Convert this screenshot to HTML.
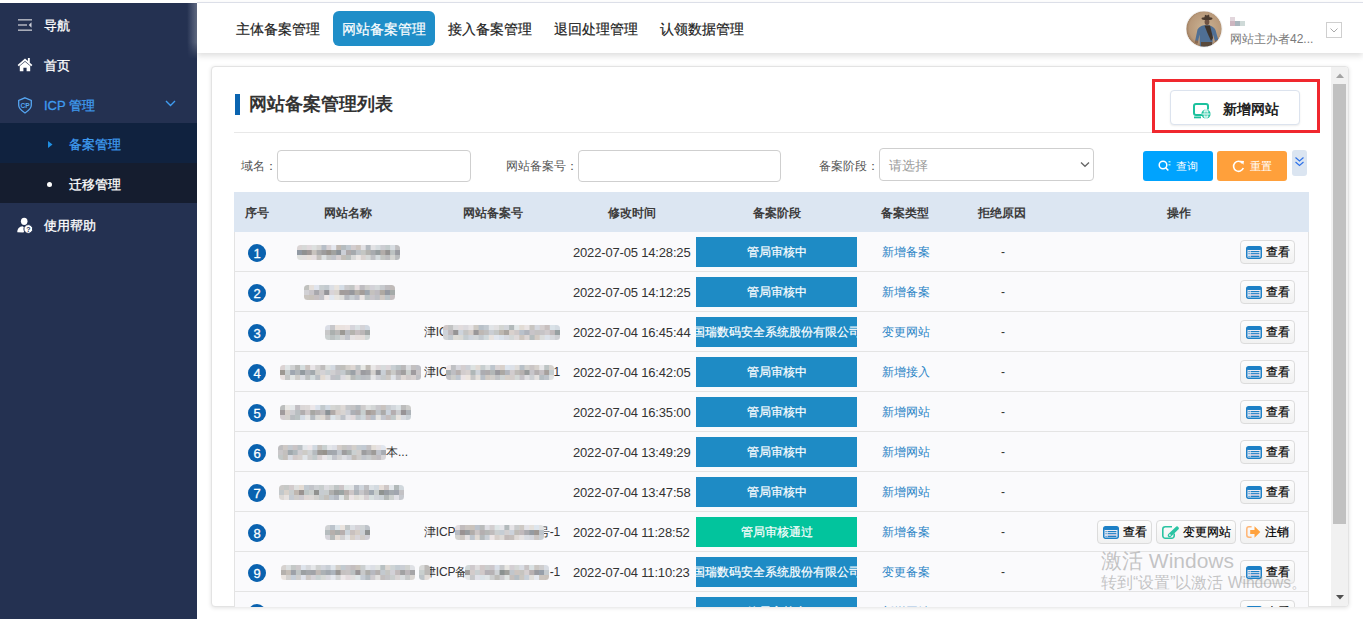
<!DOCTYPE html>
<html><head><meta charset="utf-8">
<style>
*{box-sizing:border-box;margin:0;padding:0}
html,body{width:1363px;height:619px;overflow:hidden;background:#fff;font-family:"Liberation Sans",sans-serif;color:#333}
.abs{position:absolute}
#side{position:absolute;left:0;top:3px;width:197px;height:616px;background:#243151}
.mi{position:absolute;left:0;width:197px;height:40px;color:#fff;font-size:13px;line-height:40px}
.mi .t{position:absolute;left:44px;top:2px;-webkit-text-stroke:0.3px currentColor}
.mi svg{position:absolute}
#topbar{position:absolute;left:197px;top:2px;width:1166px;height:51px;background:#fff;border-top:1px solid #dcdfe8;box-shadow:0 3px 6px rgba(0,0,0,.13)}
.nav{position:absolute;top:8px;height:35px;line-height:36px;-webkit-text-stroke:0.2px currentColor;font-size:14px;color:#222;padding:0 9px;border-radius:6px}
.nav.on{background:#1f8ec8;color:#fff}
#panel{position:absolute;left:211px;top:66px;width:1138px;height:541px;background:#fff;border:1px solid #e3e3e3;border-radius:4px;box-shadow:0 1px 4px rgba(0,0,0,.12);overflow:hidden}
.lbl{position:absolute;font-size:12px;color:#555;line-height:16px}
.inp{position:absolute;height:32px;border:1px solid #cfcfcf;border-radius:4px;background:#fff}
#thead{position:absolute;left:234px;top:192px;width:1075px;height:40px;background:#dce6f2}
.th{position:absolute;top:1px;line-height:40px;font-size:12px;font-weight:bold;color:#3c3c3c;transform:translateX(-50%);white-space:nowrap}
.row{position:absolute;left:234px;width:1075px;height:40px;background:#fafafc;border-left:1px solid #e3e3e3;border-right:1px solid #e3e3e3;border-bottom:1px solid #e4e4e4}
.badge{position:absolute;left:13px;top:12px;width:18px;height:18px;border-radius:50%;background:#0a62af;color:#fff;font-size:13px;-webkit-text-stroke:0.3px #fff;text-align:center;line-height:19px}
.blob{position:absolute}
.txt{position:absolute;top:0;line-height:40px;font-size:13px;color:#333;white-space:nowrap}
.icpt{font-size:12px;letter-spacing:-0.2px}
.date{position:absolute;left:338px;top:1px;line-height:40px;font-size:13px;color:#333;letter-spacing:-0.17px;white-space:nowrap}
.st{position:absolute;left:461px;top:5px;width:161px;height:30px;overflow:hidden;color:#fff;font-size:12px;-webkit-text-stroke:0.2px #fff;line-height:30px;text-align:center;white-space:nowrap}
.st span{position:absolute;left:50%;top:0;transform:translateX(-50%)}
.stb{background:#1e8bc5}
.stg{background:#02c49d}
.tp{position:absolute;left:647px;top:0;line-height:40px;font-size:12px;color:#2a84c6}
.dash{position:absolute;left:766px;top:0;line-height:40px;font-size:12px;color:#333}
.ops{position:absolute;right:13px;top:8px;height:24px;display:flex;gap:4px}
.ob{height:24px;border:1px solid #dcdcdc;border-radius:4px;background:linear-gradient(#fdfdfd,#f1f1f1);display:flex;align-items:center;padding-left:4.5px;font-size:12px;color:#000;-webkit-text-stroke:0.2px #000}
.ob b{font-weight:normal;margin-left:4.5px}
.ob55{width:55px}.ob80{width:80px}
#wm1{position:absolute;left:1101px;top:548px;font-size:21px;color:rgba(140,140,140,.5);white-space:nowrap;line-height:26px}
#wm2{position:absolute;left:1101px;top:574px;font-size:15.6px;color:rgba(140,140,140,.5);white-space:nowrap;line-height:18px}
</style></head><body>
<svg width="0" height="0" style="position:absolute"><defs><filter id="bl" x="-5%" y="-20%" width="110%" height="140%"><feGaussianBlur stdDeviation="0.3"/></filter></defs></svg>

<!-- sidebar -->
<div id="side">
  <div class="mi" style="top:1px">
    <svg style="left:18px;top:15px" width="14" height="12" viewBox="0 0 14 12"><rect x="0" y="0" width="14" height="1.6" fill="#a8acb8"/><rect x="0" y="5.2" width="9" height="1.6" fill="#a8acb8"/><rect x="0" y="10.4" width="14" height="1.6" fill="#a8acb8"/><path d="M13.5 3.2v5.6L10.8 6z" fill="#d0d3dc"/></svg>
    <span class="t">导航</span>
  </div>
  <div class="mi" style="top:41px">
    <svg style="left:17px;top:13px" width="16" height="15" viewBox="0 0 16 15"><path d="M8 1.6L0.6 8l1.2 1.2L8 3.9l6.2 5.3 1.2-1.2L12.8 5.7V0.9h-1.9v3.2z" fill="#fff"/><path d="M2.8 9L8 4.7l5.2 4.3v5.2H9.6v-3.4H6.4v3.4H2.8z" fill="#fff"/></svg>
    <span class="t">首页</span>
  </div>
  <div class="mi" style="top:81px;color:#3f9cf0">
    <svg style="left:18px;top:13px" width="15" height="17" viewBox="0 0 15 17"><path d="M7 0.8L13.3 3.5V8.3C13.3 11 10.5 13.8 7 16C3.5 13.8 0.7 11 0.7 8.3V3.5Z" fill="none" stroke="#55a6f2" stroke-width="1.3"/><text x="7.2" y="11.2" font-size="6.6" font-family="Liberation Sans" font-weight="bold" fill="#55a6f2" text-anchor="middle">CP</text></svg>
    <span class="t">ICP 管理</span>
    <svg style="left:165px;top:16px" width="11" height="7" viewBox="0 0 11 7"><path d="M1 1l4.5 4.5L10 1" fill="none" stroke="#3f9cf0" stroke-width="1.4"/></svg>
  </div>
  <div class="mi" style="top:120px;background:#10223f;color:#3f9cf0">
    <svg style="left:48px;top:18px" width="5" height="7" viewBox="0 0 5 7"><path d="M0 0l4.5 3.5L0 7z" fill="#1f8ee0"/></svg>
    <span class="t" style="left:69px">备案管理</span>
  </div>
  <div class="mi" style="top:160px;background:#151d2f">
    <div class="abs" style="left:47px;top:19px;width:5px;height:5px;border-radius:50%;background:#fff"></div>
    <span class="t" style="left:69px">迁移管理</span>
  </div>
  <div class="mi" style="top:201px">
    <svg style="left:17px;top:13px" width="16" height="17" viewBox="0 0 16 17"><ellipse cx="7.2" cy="4.3" rx="3.3" ry="3.6" fill="#fff"/><path d="M0.3 15.2C0.3 12 2.2 9.6 5.5 9.3L7 10.2 9.2 9.5L6.5 15.5z" fill="#fff"/><circle cx="11.3" cy="12" r="4.4" fill="#fff" stroke="#243151" stroke-width="1"/><text x="11.3" y="14.6" font-size="7" font-weight="bold" font-family="Liberation Sans" fill="#243151" text-anchor="middle">?</text></svg>
    <span class="t">使用帮助</span>
  </div>
</div>

<div class="abs" style="left:187px;top:3px;width:10px;height:56px;background:linear-gradient(90deg,rgba(255,255,255,0),rgba(220,225,235,.35));-webkit-mask-image:linear-gradient(#000 0,#000 70%,transparent 100%)"></div>
<!-- top bar -->
<div id="topbar">
  <div class="nav" style="left:30px">主体备案管理</div>
  <div class="nav on" style="left:136px">网站备案管理</div>
  <div class="nav" style="left:242px">接入备案管理</div>
  <div class="nav" style="left:348px">退回处理管理</div>
  <div class="nav" style="left:454px">认领数据管理</div>
  <svg class="abs" style="left:989px;top:8px" width="38" height="38" viewBox="0 0 38 38"><defs><clipPath id="av"><circle cx="18" cy="18" r="17.8"/></clipPath><radialGradient id="avg" cx="50%" cy="45%" r="55%"><stop offset="0" stop-color="#cbb394"/><stop offset=".75" stop-color="#b8997a"/><stop offset="1" stop-color="#8e6c4f"/></radialGradient></defs><g clip-path="url(#av)"><rect width="38" height="38" fill="url(#avg)"/><path d="M9 30.5L11.5 18.5Q13.5 15 18 14.3L23 14.3Q27.5 15.2 29.5 19L32.5 29.5 29 30.5 27 23.5 26 38H14L13.5 23.5 12 31z" fill="#4f6f94"/><path d="M18.5 14.5L24 14.5 27 27 25 30 21 21z" fill="#3e342c"/><rect x="15" y="31" width="11" height="7" fill="#5a4a3c"/><circle cx="10.5" cy="31" r="1.8" fill="#8a6a52"/><circle cx="31" cy="30.5" r="1.8" fill="#8a6a52"/><ellipse cx="21" cy="11" rx="2.4" ry="3" fill="#6e5242"/><ellipse cx="21" cy="7.5" rx="5.5" ry="1.5" fill="#4b3b2f"/><path d="M18.3 7.6L19 3.8 21 4.5 23 3.6 23.8 7.6z" fill="#4b3b2f"/></g><circle cx="18" cy="18" r="18.2" fill="none" stroke="#efefef" stroke-width=".8"/></svg>
  <div class="abs" style="left:1033px;top:14px;width:5px;height:9px;background:linear-gradient(#e2d6dc 0,#e2d6dc 45%,#cdb6c0 45%)"></div><div class="abs" style="left:1038px;top:18px;width:5px;height:5px;background:#a9b6bd"></div><div class="abs" style="left:1043px;top:18px;width:5px;height:5px;background:#cfdad8"></div>
  <div class="abs" style="left:1033px;top:27px;font-size:12px;color:#7a7a7a;line-height:18px;white-space:nowrap">网站主办者42...</div>
  <div class="abs" style="left:1129px;top:19px;width:16px;height:16px;border:1px solid #cfcfcf">
    <svg style="position:absolute;left:3px;top:5px" width="8" height="5" viewBox="0 0 8 5"><path d="M0.5 0.5L4 4l3.5-3.5" fill="none" stroke="#aaa" stroke-width="1"/></svg>
  </div>
</div>

<!-- panel -->
<div id="panel">
  <!-- scrollbar -->
  <div class="abs" style="left:1119px;top:0;width:17px;height:539px;background:#f1f1f1"></div>
  <svg class="abs" style="left:1124px;top:6px" width="8" height="5" viewBox="0 0 8 5"><path d="M0 5L4 0.5 8 5z" fill="#a3a3a3"/></svg>
  <div class="abs" style="left:1121px;top:17px;width:13px;height:440px;background:#c1c1c1"></div>
  <svg class="abs" style="left:1124px;top:528px" width="8" height="5" viewBox="0 0 8 5"><path d="M0 0L4 4.5 8 0z" fill="#505050"/></svg>
</div>

<div class="abs" style="left:235px;top:94px;width:5px;height:21px;background:#0a64b0"></div>
<div class="abs" style="left:249px;top:92px;font-size:18px;font-weight:bold;color:#333;line-height:24px">网站备案管理列表</div>
<div class="abs" style="left:234px;top:132px;width:918px;height:1px;background:#e8e8e8"></div>

<!-- new site button + red box -->
<div class="abs" style="left:1170px;top:90px;width:130px;height:35px;border:1px solid #dce3ee;border-radius:4px;background:#fff;box-shadow:0 1px 2px rgba(0,0,0,.08)">
  <svg style="position:absolute;left:22px;top:12px" width="18" height="16" viewBox="0 0 18 16"><path d="M3 1h10a2 2 0 0 1 2 2v3.5M9 12H3a2 2 0 0 1-2-2V3a2 2 0 0 1 2-2" fill="none" stroke="#1cc19d" stroke-width="2"/><rect x="1" y="13.5" width="7" height="1.8" fill="#1cc19d"/><circle cx="13" cy="11" r="4.6" fill="#1cc19d"/><path d="M8.6 11h8.8M13 6.5v9M10.6 8.2h4.8M10.6 13.8h4.8" stroke="#fff" stroke-width="0.8"/><ellipse cx="13" cy="11" rx="2" ry="4.4" fill="none" stroke="#fff" stroke-width="0.8"/></svg>
  <div class="abs" style="left:52px;top:1px;line-height:34px;font-size:14px;font-weight:bold;color:#222">新增网站</div>
</div>
<div class="abs" style="left:1152px;top:79px;width:168px;height:54px;border:3px solid #f0282e"></div>

<!-- filter -->
<div class="lbl" style="left:241px;top:158px">域名：</div>
<div class="inp" style="left:277px;top:150px;width:194px"></div>
<div class="lbl" style="left:506px;top:158px">网站备案号：</div>
<div class="inp" style="left:578px;top:150px;width:203px"></div>
<div class="lbl" style="left:819px;top:158px">备案阶段：</div>
<div class="inp" style="left:879px;top:148px;width:215px;height:33px">
  <div class="abs" style="left:9px;top:1px;line-height:32px;font-size:12.5px;color:#9a9a9a">请选择</div>
  <svg style="position:absolute;left:200px;top:12px" width="10" height="7" viewBox="0 0 10 7"><path d="M1 1.5l4 3.8 4-3.8" fill="none" stroke="#666" stroke-width="1.3"/></svg>
</div>
<div class="abs" style="left:1143px;top:151px;width:70px;height:30px;border-radius:3px;background:#00a3fe;color:#fff;font-size:12px;line-height:30px">
  <svg style="position:absolute;left:15px;top:9px" width="13" height="12" viewBox="0 0 13 12"><circle cx="5" cy="5" r="3.8" fill="none" stroke="#fff" stroke-width="1.5"/><path d="M7.8 7.8l2.5 2.8" stroke="#fff" stroke-width="1.5"/><rect x="10.5" y="1.2" width="2" height="1.2" fill="#cfe"/><rect x="10.5" y="4.2" width="2" height="1.2" fill="#cfe"/></svg>
  <span class="abs" style="left:33px;top:0;font-size:11px">查询</span>
</div>
<div class="abs" style="left:1217px;top:151px;width:70px;height:30px;border-radius:3px;background:#ffa03b;color:#fff;font-size:12px;line-height:30px">
  <svg style="position:absolute;left:15px;top:8px" width="13" height="14" viewBox="0 0 13 14"><path d="M10.5 4.2A5 5 0 1 0 11.3 9" fill="none" stroke="#fff" stroke-width="1.6"/><path d="M8.2 1.8l3.8 0.2-0.6 3.7z" fill="#fff"/></svg>
  <span class="abs" style="left:33px;top:0;font-size:11px">重置</span>
</div>
<div class="abs" style="left:1292px;top:150px;width:15px;height:26px;border-radius:3px;background:#dbe5f1">
  <svg style="position:absolute;left:2px;top:6px" width="11" height="12" viewBox="0 0 11 12"><path d="M1.5 1.5l4 3.5 4-3.5M1.5 6l4 3.5 4-3.5" fill="none" stroke="#2f72e8" stroke-width="1.2"/></svg>
</div>

<!-- table header -->
<div id="thead">
  <div class="th" style="left:23px">序号</div>
  <div class="th" style="left:114px">网站名称</div>
  <div class="th" style="left:259px">网站备案号</div>
  <div class="th" style="left:398px">修改时间</div>
  <div class="th" style="left:543px">备案阶段</div>
  <div class="th" style="left:671px">备案类型</div>
  <div class="th" style="left:768px">拒绝原因</div>
  <div class="th" style="left:945px">操作</div>
</div>

<div class="abs" style="left:0;top:0;width:1363px;height:607px;overflow:hidden;pointer-events:none">
<div class="row" style="top:232px"><div class="badge">1</div><svg class="blob" style="left:62px;top:13px" width="103" height="15" viewBox="0 0 103 15"><clipPath id="c11"><rect width="103" height="15" rx="3.5"/></clipPath><g clip-path="url(#c11)"><g filter="url(#bl)"><rect x="0.0" y="0.0" width="5.5" height="5.6" fill="rgb(219,213,213)"/><rect x="4.9" y="0.0" width="5.5" height="5.6" fill="rgb(215,217,216)"/><rect x="9.8" y="0.0" width="5.5" height="5.6" fill="rgb(224,217,220)"/><rect x="14.7" y="0.0" width="5.5" height="5.6" fill="rgb(221,224,223)"/><rect x="19.6" y="0.0" width="5.5" height="5.6" fill="rgb(214,213,211)"/><rect x="24.5" y="0.0" width="5.5" height="5.6" fill="rgb(183,190,199)"/><rect x="29.4" y="0.0" width="5.5" height="5.6" fill="rgb(216,210,213)"/><rect x="34.3" y="0.0" width="5.5" height="5.6" fill="rgb(229,232,239)"/><rect x="39.2" y="0.0" width="5.5" height="5.6" fill="rgb(193,185,178)"/><rect x="44.1" y="0.0" width="5.5" height="5.6" fill="rgb(181,188,191)"/><rect x="49.0" y="0.0" width="5.5" height="5.6" fill="rgb(192,200,207)"/><rect x="54.0" y="0.0" width="5.5" height="5.6" fill="rgb(211,205,207)"/><rect x="58.9" y="0.0" width="5.5" height="5.6" fill="rgb(205,197,192)"/><rect x="63.8" y="0.0" width="5.5" height="5.6" fill="rgb(226,225,228)"/><rect x="68.7" y="0.0" width="5.5" height="5.6" fill="rgb(179,185,191)"/><rect x="73.6" y="0.0" width="5.5" height="5.6" fill="rgb(226,226,228)"/><rect x="78.5" y="0.0" width="5.5" height="5.6" fill="rgb(214,220,223)"/><rect x="83.4" y="0.0" width="5.5" height="5.6" fill="rgb(204,205,210)"/><rect x="88.3" y="0.0" width="5.5" height="5.6" fill="rgb(195,203,204)"/><rect x="93.2" y="0.0" width="5.5" height="5.6" fill="rgb(216,221,226)"/><rect x="98.1" y="0.0" width="5.5" height="5.6" fill="rgb(192,191,193)"/><rect x="0.0" y="5.0" width="5.5" height="5.6" fill="rgb(145,153,163)"/><rect x="4.9" y="5.0" width="5.5" height="5.6" fill="rgb(143,145,145)"/><rect x="9.8" y="5.0" width="5.5" height="5.6" fill="rgb(158,151,150)"/><rect x="14.7" y="5.0" width="5.5" height="5.6" fill="rgb(200,195,190)"/><rect x="19.6" y="5.0" width="5.5" height="5.6" fill="rgb(170,170,171)"/><rect x="24.5" y="5.0" width="5.5" height="5.6" fill="rgb(157,156,157)"/><rect x="29.4" y="5.0" width="5.5" height="5.6" fill="rgb(151,146,141)"/><rect x="34.3" y="5.0" width="5.5" height="5.6" fill="rgb(161,162,160)"/><rect x="39.2" y="5.0" width="5.5" height="5.6" fill="rgb(139,146,153)"/><rect x="44.1" y="5.0" width="5.5" height="5.6" fill="rgb(204,207,215)"/><rect x="49.0" y="5.0" width="5.5" height="5.6" fill="rgb(175,169,170)"/><rect x="54.0" y="5.0" width="5.5" height="5.6" fill="rgb(165,169,173)"/><rect x="58.9" y="5.0" width="5.5" height="5.6" fill="rgb(189,194,199)"/><rect x="63.8" y="5.0" width="5.5" height="5.6" fill="rgb(196,198,195)"/><rect x="68.7" y="5.0" width="5.5" height="5.6" fill="rgb(180,179,175)"/><rect x="73.6" y="5.0" width="5.5" height="5.6" fill="rgb(168,171,175)"/><rect x="78.5" y="5.0" width="5.5" height="5.6" fill="rgb(150,157,159)"/><rect x="83.4" y="5.0" width="5.5" height="5.6" fill="rgb(178,172,169)"/><rect x="88.3" y="5.0" width="5.5" height="5.6" fill="rgb(148,146,145)"/><rect x="93.2" y="5.0" width="5.5" height="5.6" fill="rgb(188,194,194)"/><rect x="98.1" y="5.0" width="5.5" height="5.6" fill="rgb(154,156,162)"/><rect x="0.0" y="10.0" width="5.5" height="5.6" fill="rgb(224,225,222)"/><rect x="4.9" y="10.0" width="5.5" height="5.6" fill="rgb(226,223,223)"/><rect x="9.8" y="10.0" width="5.5" height="5.6" fill="rgb(230,224,219)"/><rect x="14.7" y="10.0" width="5.5" height="5.6" fill="rgb(229,222,224)"/><rect x="19.6" y="10.0" width="5.5" height="5.6" fill="rgb(197,193,189)"/><rect x="24.5" y="10.0" width="5.5" height="5.6" fill="rgb(221,225,227)"/><rect x="29.4" y="10.0" width="5.5" height="5.6" fill="rgb(198,199,199)"/><rect x="34.3" y="10.0" width="5.5" height="5.6" fill="rgb(193,195,202)"/><rect x="39.2" y="10.0" width="5.5" height="5.6" fill="rgb(216,209,211)"/><rect x="44.1" y="10.0" width="5.5" height="5.6" fill="rgb(195,190,184)"/><rect x="49.0" y="10.0" width="5.5" height="5.6" fill="rgb(186,191,190)"/><rect x="54.0" y="10.0" width="5.5" height="5.6" fill="rgb(217,217,216)"/><rect x="58.9" y="10.0" width="5.5" height="5.6" fill="rgb(236,232,230)"/><rect x="63.8" y="10.0" width="5.5" height="5.6" fill="rgb(218,211,208)"/><rect x="68.7" y="10.0" width="5.5" height="5.6" fill="rgb(215,218,217)"/><rect x="73.6" y="10.0" width="5.5" height="5.6" fill="rgb(192,193,197)"/><rect x="78.5" y="10.0" width="5.5" height="5.6" fill="rgb(214,220,223)"/><rect x="83.4" y="10.0" width="5.5" height="5.6" fill="rgb(196,198,195)"/><rect x="88.3" y="10.0" width="5.5" height="5.6" fill="rgb(189,189,191)"/><rect x="93.2" y="10.0" width="5.5" height="5.6" fill="rgb(212,213,210)"/><rect x="98.1" y="10.0" width="5.5" height="5.6" fill="rgb(184,187,189)"/></g></g></svg><div class="date">2022-07-05 14:28:25</div><div class="st stb"><span>管局审核中</span></div><div class="tp">新增备案</div><div class="dash">-</div><div class="ops"><span class="ob ob55"><svg width="16" height="13" viewBox="0 0 16 13"><path d="M0.75 2.5A1.75 1.75 0 0 1 2.5 0.75h11A1.75 1.75 0 0 1 15.25 2.5v8A1.75 1.75 0 0 1 13.5 12.25h-11A1.75 1.75 0 0 1 0.75 10.5z" fill="#eeedf5" stroke="#1d80c6" stroke-width="1.5"/><rect x="0.75" y="0.75" width="14.5" height="3.2" rx="1.5" fill="#1d80c6"/><rect x="4.6" y="5" width="8.8" height="1.2" fill="#1d80c6"/><rect x="4.6" y="7.1" width="8.8" height="1.2" fill="#1d80c6"/><rect x="4.6" y="8.3" width="8.8" height="1.5" fill="#c9c6de"/><rect x="4.6" y="9.8" width="8.8" height="1.2" fill="#1d80c6"/><rect x="2.5" y="5" width="1.1" height="1.2" fill="#1d80c6"/><rect x="2.5" y="7.1" width="1.1" height="1.2" fill="#1d80c6"/><rect x="2.5" y="9.8" width="1.1" height="1.2" fill="#1d80c6"/></svg><b>查看</b></span></div></div>
<div class="row" style="top:272px"><div class="badge">2</div><svg class="blob" style="left:69px;top:13px" width="91" height="15" viewBox="0 0 91 15"><clipPath id="c22"><rect width="91" height="15" rx="3.5"/></clipPath><g clip-path="url(#c22)"><g filter="url(#bl)"><rect x="0.0" y="0.0" width="5.7" height="5.6" fill="rgb(192,193,190)"/><rect x="5.1" y="0.0" width="5.7" height="5.6" fill="rgb(230,224,219)"/><rect x="10.1" y="0.0" width="5.7" height="5.6" fill="rgb(224,229,238)"/><rect x="15.2" y="0.0" width="5.7" height="5.6" fill="rgb(201,207,209)"/><rect x="20.2" y="0.0" width="5.7" height="5.6" fill="rgb(195,202,207)"/><rect x="25.3" y="0.0" width="5.7" height="5.6" fill="rgb(220,223,229)"/><rect x="30.3" y="0.0" width="5.7" height="5.6" fill="rgb(233,228,222)"/><rect x="35.4" y="0.0" width="5.7" height="5.6" fill="rgb(213,221,230)"/><rect x="40.4" y="0.0" width="5.7" height="5.6" fill="rgb(202,201,203)"/><rect x="45.5" y="0.0" width="5.7" height="5.6" fill="rgb(194,197,196)"/><rect x="50.6" y="0.0" width="5.7" height="5.6" fill="rgb(230,222,223)"/><rect x="55.6" y="0.0" width="5.7" height="5.6" fill="rgb(190,188,192)"/><rect x="60.7" y="0.0" width="5.7" height="5.6" fill="rgb(206,206,204)"/><rect x="65.7" y="0.0" width="5.7" height="5.6" fill="rgb(211,210,216)"/><rect x="70.8" y="0.0" width="5.7" height="5.6" fill="rgb(213,217,219)"/><rect x="75.8" y="0.0" width="5.7" height="5.6" fill="rgb(199,202,206)"/><rect x="80.9" y="0.0" width="5.7" height="5.6" fill="rgb(190,188,191)"/><rect x="85.9" y="0.0" width="5.7" height="5.6" fill="rgb(192,187,185)"/><rect x="0.0" y="5.0" width="5.7" height="5.6" fill="rgb(210,209,213)"/><rect x="5.1" y="5.0" width="5.7" height="5.6" fill="rgb(201,197,201)"/><rect x="10.1" y="5.0" width="5.7" height="5.6" fill="rgb(169,168,173)"/><rect x="15.2" y="5.0" width="5.7" height="5.6" fill="rgb(196,192,195)"/><rect x="20.2" y="5.0" width="5.7" height="5.6" fill="rgb(149,148,153)"/><rect x="25.3" y="5.0" width="5.7" height="5.6" fill="rgb(217,212,216)"/><rect x="30.3" y="5.0" width="5.7" height="5.6" fill="rgb(217,212,207)"/><rect x="35.4" y="5.0" width="5.7" height="5.6" fill="rgb(162,156,154)"/><rect x="40.4" y="5.0" width="5.7" height="5.6" fill="rgb(162,157,157)"/><rect x="45.5" y="5.0" width="5.7" height="5.6" fill="rgb(150,152,157)"/><rect x="50.6" y="5.0" width="5.7" height="5.6" fill="rgb(179,175,169)"/><rect x="55.6" y="5.0" width="5.7" height="5.6" fill="rgb(163,157,153)"/><rect x="60.7" y="5.0" width="5.7" height="5.6" fill="rgb(158,166,174)"/><rect x="65.7" y="5.0" width="5.7" height="5.6" fill="rgb(196,193,190)"/><rect x="70.8" y="5.0" width="5.7" height="5.6" fill="rgb(190,187,192)"/><rect x="75.8" y="5.0" width="5.7" height="5.6" fill="rgb(175,169,162)"/><rect x="80.9" y="5.0" width="5.7" height="5.6" fill="rgb(149,153,161)"/><rect x="85.9" y="5.0" width="5.7" height="5.6" fill="rgb(165,170,169)"/><rect x="0.0" y="10.0" width="5.7" height="5.6" fill="rgb(202,197,192)"/><rect x="5.1" y="10.0" width="5.7" height="5.6" fill="rgb(200,194,187)"/><rect x="10.1" y="10.0" width="5.7" height="5.6" fill="rgb(199,192,193)"/><rect x="15.2" y="10.0" width="5.7" height="5.6" fill="rgb(194,193,199)"/><rect x="20.2" y="10.0" width="5.7" height="5.6" fill="rgb(239,232,232)"/><rect x="25.3" y="10.0" width="5.7" height="5.6" fill="rgb(225,231,240)"/><rect x="30.3" y="10.0" width="5.7" height="5.6" fill="rgb(233,230,226)"/><rect x="35.4" y="10.0" width="5.7" height="5.6" fill="rgb(223,223,220)"/><rect x="40.4" y="10.0" width="5.7" height="5.6" fill="rgb(183,186,192)"/><rect x="45.5" y="10.0" width="5.7" height="5.6" fill="rgb(201,207,211)"/><rect x="50.6" y="10.0" width="5.7" height="5.6" fill="rgb(188,191,199)"/><rect x="55.6" y="10.0" width="5.7" height="5.6" fill="rgb(234,229,227)"/><rect x="60.7" y="10.0" width="5.7" height="5.6" fill="rgb(189,196,197)"/><rect x="65.7" y="10.0" width="5.7" height="5.6" fill="rgb(200,197,202)"/><rect x="70.8" y="10.0" width="5.7" height="5.6" fill="rgb(190,192,197)"/><rect x="75.8" y="10.0" width="5.7" height="5.6" fill="rgb(208,201,195)"/><rect x="80.9" y="10.0" width="5.7" height="5.6" fill="rgb(188,196,200)"/><rect x="85.9" y="10.0" width="5.7" height="5.6" fill="rgb(198,191,193)"/></g></g></svg><div class="date">2022-07-05 14:12:25</div><div class="st stb"><span>管局审核中</span></div><div class="tp">新增备案</div><div class="dash">-</div><div class="ops"><span class="ob ob55"><svg width="16" height="13" viewBox="0 0 16 13"><path d="M0.75 2.5A1.75 1.75 0 0 1 2.5 0.75h11A1.75 1.75 0 0 1 15.25 2.5v8A1.75 1.75 0 0 1 13.5 12.25h-11A1.75 1.75 0 0 1 0.75 10.5z" fill="#eeedf5" stroke="#1d80c6" stroke-width="1.5"/><rect x="0.75" y="0.75" width="14.5" height="3.2" rx="1.5" fill="#1d80c6"/><rect x="4.6" y="5" width="8.8" height="1.2" fill="#1d80c6"/><rect x="4.6" y="7.1" width="8.8" height="1.2" fill="#1d80c6"/><rect x="4.6" y="8.3" width="8.8" height="1.5" fill="#c9c6de"/><rect x="4.6" y="9.8" width="8.8" height="1.2" fill="#1d80c6"/><rect x="2.5" y="5" width="1.1" height="1.2" fill="#1d80c6"/><rect x="2.5" y="7.1" width="1.1" height="1.2" fill="#1d80c6"/><rect x="2.5" y="9.8" width="1.1" height="1.2" fill="#1d80c6"/></svg><b>查看</b></span></div></div>
<div class="row" style="top:312px"><div class="badge">3</div><svg class="blob" style="left:90px;top:13px" width="45" height="15" viewBox="0 0 45 15"><clipPath id="c33"><rect width="45" height="15" rx="3.5"/></clipPath><g clip-path="url(#c33)"><g filter="url(#bl)"><rect x="0.0" y="0.0" width="5.6" height="5.6" fill="rgb(218,221,229)"/><rect x="5.0" y="0.0" width="5.6" height="5.6" fill="rgb(199,199,202)"/><rect x="10.0" y="0.0" width="5.6" height="5.6" fill="rgb(234,226,220)"/><rect x="15.0" y="0.0" width="5.6" height="5.6" fill="rgb(234,226,223)"/><rect x="20.0" y="0.0" width="5.6" height="5.6" fill="rgb(236,228,227)"/><rect x="25.0" y="0.0" width="5.6" height="5.6" fill="rgb(214,213,219)"/><rect x="30.0" y="0.0" width="5.6" height="5.6" fill="rgb(219,225,228)"/><rect x="35.0" y="0.0" width="5.6" height="5.6" fill="rgb(212,211,215)"/><rect x="40.0" y="0.0" width="5.6" height="5.6" fill="rgb(209,216,225)"/><rect x="0.0" y="5.0" width="5.6" height="5.6" fill="rgb(199,199,200)"/><rect x="5.0" y="5.0" width="5.6" height="5.6" fill="rgb(171,176,175)"/><rect x="10.0" y="5.0" width="5.6" height="5.6" fill="rgb(186,185,184)"/><rect x="15.0" y="5.0" width="5.6" height="5.6" fill="rgb(156,153,149)"/><rect x="20.0" y="5.0" width="5.6" height="5.6" fill="rgb(185,186,191)"/><rect x="25.0" y="5.0" width="5.6" height="5.6" fill="rgb(181,179,174)"/><rect x="30.0" y="5.0" width="5.6" height="5.6" fill="rgb(198,190,192)"/><rect x="35.0" y="5.0" width="5.6" height="5.6" fill="rgb(187,183,183)"/><rect x="40.0" y="5.0" width="5.6" height="5.6" fill="rgb(163,168,167)"/><rect x="0.0" y="10.0" width="5.6" height="5.6" fill="rgb(203,208,208)"/><rect x="5.0" y="10.0" width="5.6" height="5.6" fill="rgb(188,194,194)"/><rect x="10.0" y="10.0" width="5.6" height="5.6" fill="rgb(197,205,205)"/><rect x="15.0" y="10.0" width="5.6" height="5.6" fill="rgb(211,211,212)"/><rect x="20.0" y="10.0" width="5.6" height="5.6" fill="rgb(195,197,204)"/><rect x="25.0" y="10.0" width="5.6" height="5.6" fill="rgb(230,226,227)"/><rect x="30.0" y="10.0" width="5.6" height="5.6" fill="rgb(230,223,221)"/><rect x="35.0" y="10.0" width="5.6" height="5.6" fill="rgb(228,222,219)"/><rect x="40.0" y="10.0" width="5.6" height="5.6" fill="rgb(210,216,215)"/></g></g></svg><div class="txt icpt" style="left:189px">津IC</div><svg class="blob" style="left:208px;top:13px" width="117" height="15" viewBox="0 0 117 15"><clipPath id="c51"><rect width="117" height="15" rx="3.5"/></clipPath><g clip-path="url(#c51)"><g filter="url(#bl)"><rect x="0.0" y="0.0" width="5.7" height="5.6" fill="rgb(208,200,200)"/><rect x="5.1" y="0.0" width="5.7" height="5.6" fill="rgb(194,195,195)"/><rect x="10.2" y="0.0" width="5.7" height="5.6" fill="rgb(220,220,222)"/><rect x="15.3" y="0.0" width="5.7" height="5.6" fill="rgb(226,220,221)"/><rect x="20.3" y="0.0" width="5.7" height="5.6" fill="rgb(220,218,222)"/><rect x="25.4" y="0.0" width="5.7" height="5.6" fill="rgb(230,227,228)"/><rect x="30.5" y="0.0" width="5.7" height="5.6" fill="rgb(206,202,196)"/><rect x="35.6" y="0.0" width="5.7" height="5.6" fill="rgb(184,192,200)"/><rect x="40.7" y="0.0" width="5.7" height="5.6" fill="rgb(194,201,208)"/><rect x="45.8" y="0.0" width="5.7" height="5.6" fill="rgb(225,228,231)"/><rect x="50.9" y="0.0" width="5.7" height="5.6" fill="rgb(225,224,225)"/><rect x="56.0" y="0.0" width="5.7" height="5.6" fill="rgb(211,213,210)"/><rect x="61.0" y="0.0" width="5.7" height="5.6" fill="rgb(210,213,218)"/><rect x="66.1" y="0.0" width="5.7" height="5.6" fill="rgb(178,185,186)"/><rect x="71.2" y="0.0" width="5.7" height="5.6" fill="rgb(227,232,233)"/><rect x="76.3" y="0.0" width="5.7" height="5.6" fill="rgb(226,220,213)"/><rect x="81.4" y="0.0" width="5.7" height="5.6" fill="rgb(233,228,228)"/><rect x="86.5" y="0.0" width="5.7" height="5.6" fill="rgb(200,197,193)"/><rect x="91.6" y="0.0" width="5.7" height="5.6" fill="rgb(213,216,223)"/><rect x="96.7" y="0.0" width="5.7" height="5.6" fill="rgb(213,207,207)"/><rect x="101.7" y="0.0" width="5.7" height="5.6" fill="rgb(200,192,191)"/><rect x="106.8" y="0.0" width="5.7" height="5.6" fill="rgb(218,226,232)"/><rect x="111.9" y="0.0" width="5.7" height="5.6" fill="rgb(212,219,226)"/><rect x="0.0" y="5.0" width="5.7" height="5.6" fill="rgb(205,210,217)"/><rect x="5.1" y="5.0" width="5.7" height="5.6" fill="rgb(190,184,187)"/><rect x="10.2" y="5.0" width="5.7" height="5.6" fill="rgb(150,148,149)"/><rect x="15.3" y="5.0" width="5.7" height="5.6" fill="rgb(206,212,220)"/><rect x="20.3" y="5.0" width="5.7" height="5.6" fill="rgb(197,197,196)"/><rect x="25.4" y="5.0" width="5.7" height="5.6" fill="rgb(212,205,201)"/><rect x="30.5" y="5.0" width="5.7" height="5.6" fill="rgb(153,151,153)"/><rect x="35.6" y="5.0" width="5.7" height="5.6" fill="rgb(190,184,180)"/><rect x="40.7" y="5.0" width="5.7" height="5.6" fill="rgb(191,190,190)"/><rect x="45.8" y="5.0" width="5.7" height="5.6" fill="rgb(202,206,212)"/><rect x="50.9" y="5.0" width="5.7" height="5.6" fill="rgb(196,199,198)"/><rect x="56.0" y="5.0" width="5.7" height="5.6" fill="rgb(189,183,176)"/><rect x="61.0" y="5.0" width="5.7" height="5.6" fill="rgb(170,165,160)"/><rect x="66.1" y="5.0" width="5.7" height="5.6" fill="rgb(217,209,205)"/><rect x="71.2" y="5.0" width="5.7" height="5.6" fill="rgb(207,201,201)"/><rect x="76.3" y="5.0" width="5.7" height="5.6" fill="rgb(185,193,203)"/><rect x="81.4" y="5.0" width="5.7" height="5.6" fill="rgb(176,180,188)"/><rect x="86.5" y="5.0" width="5.7" height="5.6" fill="rgb(200,196,200)"/><rect x="91.6" y="5.0" width="5.7" height="5.6" fill="rgb(196,194,194)"/><rect x="96.7" y="5.0" width="5.7" height="5.6" fill="rgb(198,196,199)"/><rect x="101.7" y="5.0" width="5.7" height="5.6" fill="rgb(208,203,205)"/><rect x="106.8" y="5.0" width="5.7" height="5.6" fill="rgb(193,186,188)"/><rect x="111.9" y="5.0" width="5.7" height="5.6" fill="rgb(152,160,162)"/><rect x="0.0" y="10.0" width="5.7" height="5.6" fill="rgb(208,210,213)"/><rect x="5.1" y="10.0" width="5.7" height="5.6" fill="rgb(194,201,207)"/><rect x="10.2" y="10.0" width="5.7" height="5.6" fill="rgb(222,220,215)"/><rect x="15.3" y="10.0" width="5.7" height="5.6" fill="rgb(218,218,214)"/><rect x="20.3" y="10.0" width="5.7" height="5.6" fill="rgb(197,205,209)"/><rect x="25.4" y="10.0" width="5.7" height="5.6" fill="rgb(207,213,221)"/><rect x="30.5" y="10.0" width="5.7" height="5.6" fill="rgb(211,215,218)"/><rect x="35.6" y="10.0" width="5.7" height="5.6" fill="rgb(196,202,208)"/><rect x="40.7" y="10.0" width="5.7" height="5.6" fill="rgb(209,217,220)"/><rect x="45.8" y="10.0" width="5.7" height="5.6" fill="rgb(232,227,223)"/><rect x="50.9" y="10.0" width="5.7" height="5.6" fill="rgb(226,231,239)"/><rect x="56.0" y="10.0" width="5.7" height="5.6" fill="rgb(218,226,235)"/><rect x="61.0" y="10.0" width="5.7" height="5.6" fill="rgb(215,218,225)"/><rect x="66.1" y="10.0" width="5.7" height="5.6" fill="rgb(211,215,215)"/><rect x="71.2" y="10.0" width="5.7" height="5.6" fill="rgb(223,218,218)"/><rect x="76.3" y="10.0" width="5.7" height="5.6" fill="rgb(205,198,191)"/><rect x="81.4" y="10.0" width="5.7" height="5.6" fill="rgb(220,214,213)"/><rect x="86.5" y="10.0" width="5.7" height="5.6" fill="rgb(182,189,190)"/><rect x="91.6" y="10.0" width="5.7" height="5.6" fill="rgb(211,203,196)"/><rect x="96.7" y="10.0" width="5.7" height="5.6" fill="rgb(219,221,220)"/><rect x="101.7" y="10.0" width="5.7" height="5.6" fill="rgb(220,226,234)"/><rect x="106.8" y="10.0" width="5.7" height="5.6" fill="rgb(215,217,221)"/><rect x="111.9" y="10.0" width="5.7" height="5.6" fill="rgb(206,207,211)"/></g></g></svg><div class="date">2022-07-04 16:45:44</div><div class="st stb"><span>国瑞数码安全系统股份有限公司</span></div><div class="tp">变更网站</div><div class="dash">-</div><div class="ops"><span class="ob ob55"><svg width="16" height="13" viewBox="0 0 16 13"><path d="M0.75 2.5A1.75 1.75 0 0 1 2.5 0.75h11A1.75 1.75 0 0 1 15.25 2.5v8A1.75 1.75 0 0 1 13.5 12.25h-11A1.75 1.75 0 0 1 0.75 10.5z" fill="#eeedf5" stroke="#1d80c6" stroke-width="1.5"/><rect x="0.75" y="0.75" width="14.5" height="3.2" rx="1.5" fill="#1d80c6"/><rect x="4.6" y="5" width="8.8" height="1.2" fill="#1d80c6"/><rect x="4.6" y="7.1" width="8.8" height="1.2" fill="#1d80c6"/><rect x="4.6" y="8.3" width="8.8" height="1.5" fill="#c9c6de"/><rect x="4.6" y="9.8" width="8.8" height="1.2" fill="#1d80c6"/><rect x="2.5" y="5" width="1.1" height="1.2" fill="#1d80c6"/><rect x="2.5" y="7.1" width="1.1" height="1.2" fill="#1d80c6"/><rect x="2.5" y="9.8" width="1.1" height="1.2" fill="#1d80c6"/></svg><b>查看</b></span></div></div>
<div class="row" style="top:352px"><div class="badge">4</div><svg class="blob" style="left:45px;top:13px" width="141" height="15" viewBox="0 0 141 15"><clipPath id="c44"><rect width="141" height="15" rx="3.5"/></clipPath><g clip-path="url(#c44)"><g filter="url(#bl)"><rect x="0.0" y="0.0" width="5.6" height="5.6" fill="rgb(219,211,211)"/><rect x="5.0" y="0.0" width="5.6" height="5.6" fill="rgb(224,229,230)"/><rect x="10.1" y="0.0" width="5.6" height="5.6" fill="rgb(208,209,210)"/><rect x="15.1" y="0.0" width="5.6" height="5.6" fill="rgb(185,186,184)"/><rect x="20.1" y="0.0" width="5.6" height="5.6" fill="rgb(213,221,222)"/><rect x="25.2" y="0.0" width="5.6" height="5.6" fill="rgb(203,195,191)"/><rect x="30.2" y="0.0" width="5.6" height="5.6" fill="rgb(233,229,232)"/><rect x="35.2" y="0.0" width="5.6" height="5.6" fill="rgb(212,210,210)"/><rect x="40.3" y="0.0" width="5.6" height="5.6" fill="rgb(191,189,188)"/><rect x="45.3" y="0.0" width="5.6" height="5.6" fill="rgb(221,224,223)"/><rect x="50.4" y="0.0" width="5.6" height="5.6" fill="rgb(211,217,225)"/><rect x="55.4" y="0.0" width="5.6" height="5.6" fill="rgb(191,191,192)"/><rect x="60.4" y="0.0" width="5.6" height="5.6" fill="rgb(192,191,187)"/><rect x="65.5" y="0.0" width="5.6" height="5.6" fill="rgb(211,207,202)"/><rect x="70.5" y="0.0" width="5.6" height="5.6" fill="rgb(222,215,211)"/><rect x="75.5" y="0.0" width="5.6" height="5.6" fill="rgb(193,197,199)"/><rect x="80.6" y="0.0" width="5.6" height="5.6" fill="rgb(231,232,229)"/><rect x="85.6" y="0.0" width="5.6" height="5.6" fill="rgb(192,187,181)"/><rect x="90.6" y="0.0" width="5.6" height="5.6" fill="rgb(234,232,232)"/><rect x="95.7" y="0.0" width="5.6" height="5.6" fill="rgb(221,215,217)"/><rect x="100.7" y="0.0" width="5.6" height="5.6" fill="rgb(215,219,220)"/><rect x="105.8" y="0.0" width="5.6" height="5.6" fill="rgb(221,215,218)"/><rect x="110.8" y="0.0" width="5.6" height="5.6" fill="rgb(200,207,211)"/><rect x="115.8" y="0.0" width="5.6" height="5.6" fill="rgb(187,195,198)"/><rect x="120.9" y="0.0" width="5.6" height="5.6" fill="rgb(186,185,186)"/><rect x="125.9" y="0.0" width="5.6" height="5.6" fill="rgb(219,221,224)"/><rect x="130.9" y="0.0" width="5.6" height="5.6" fill="rgb(195,192,192)"/><rect x="136.0" y="0.0" width="5.6" height="5.6" fill="rgb(191,192,198)"/><rect x="0.0" y="5.0" width="5.6" height="5.6" fill="rgb(157,152,146)"/><rect x="5.0" y="5.0" width="5.6" height="5.6" fill="rgb(200,205,206)"/><rect x="10.1" y="5.0" width="5.6" height="5.6" fill="rgb(159,167,176)"/><rect x="15.1" y="5.0" width="5.6" height="5.6" fill="rgb(176,182,185)"/><rect x="20.1" y="5.0" width="5.6" height="5.6" fill="rgb(146,154,160)"/><rect x="25.2" y="5.0" width="5.6" height="5.6" fill="rgb(177,180,186)"/><rect x="30.2" y="5.0" width="5.6" height="5.6" fill="rgb(162,169,173)"/><rect x="35.2" y="5.0" width="5.6" height="5.6" fill="rgb(206,206,203)"/><rect x="40.3" y="5.0" width="5.6" height="5.6" fill="rgb(212,210,213)"/><rect x="45.3" y="5.0" width="5.6" height="5.6" fill="rgb(201,207,210)"/><rect x="50.4" y="5.0" width="5.6" height="5.6" fill="rgb(208,207,209)"/><rect x="55.4" y="5.0" width="5.6" height="5.6" fill="rgb(197,196,200)"/><rect x="60.4" y="5.0" width="5.6" height="5.6" fill="rgb(196,202,206)"/><rect x="65.5" y="5.0" width="5.6" height="5.6" fill="rgb(173,177,177)"/><rect x="70.5" y="5.0" width="5.6" height="5.6" fill="rgb(155,161,167)"/><rect x="75.5" y="5.0" width="5.6" height="5.6" fill="rgb(198,195,197)"/><rect x="80.6" y="5.0" width="5.6" height="5.6" fill="rgb(155,155,160)"/><rect x="85.6" y="5.0" width="5.6" height="5.6" fill="rgb(162,162,166)"/><rect x="90.6" y="5.0" width="5.6" height="5.6" fill="rgb(212,209,207)"/><rect x="95.7" y="5.0" width="5.6" height="5.6" fill="rgb(148,149,154)"/><rect x="100.7" y="5.0" width="5.6" height="5.6" fill="rgb(201,207,214)"/><rect x="105.8" y="5.0" width="5.6" height="5.6" fill="rgb(184,179,175)"/><rect x="110.8" y="5.0" width="5.6" height="5.6" fill="rgb(202,202,200)"/><rect x="115.8" y="5.0" width="5.6" height="5.6" fill="rgb(177,174,177)"/><rect x="120.9" y="5.0" width="5.6" height="5.6" fill="rgb(161,159,159)"/><rect x="125.9" y="5.0" width="5.6" height="5.6" fill="rgb(204,208,206)"/><rect x="130.9" y="5.0" width="5.6" height="5.6" fill="rgb(159,155,159)"/><rect x="136.0" y="5.0" width="5.6" height="5.6" fill="rgb(200,196,199)"/><rect x="0.0" y="10.0" width="5.6" height="5.6" fill="rgb(233,225,224)"/><rect x="5.0" y="10.0" width="5.6" height="5.6" fill="rgb(198,199,198)"/><rect x="10.1" y="10.0" width="5.6" height="5.6" fill="rgb(225,229,227)"/><rect x="15.1" y="10.0" width="5.6" height="5.6" fill="rgb(207,206,202)"/><rect x="20.1" y="10.0" width="5.6" height="5.6" fill="rgb(217,219,225)"/><rect x="25.2" y="10.0" width="5.6" height="5.6" fill="rgb(190,193,194)"/><rect x="30.2" y="10.0" width="5.6" height="5.6" fill="rgb(211,219,220)"/><rect x="35.2" y="10.0" width="5.6" height="5.6" fill="rgb(187,192,197)"/><rect x="40.3" y="10.0" width="5.6" height="5.6" fill="rgb(227,219,211)"/><rect x="45.3" y="10.0" width="5.6" height="5.6" fill="rgb(226,225,227)"/><rect x="50.4" y="10.0" width="5.6" height="5.6" fill="rgb(193,193,199)"/><rect x="55.4" y="10.0" width="5.6" height="5.6" fill="rgb(189,195,199)"/><rect x="60.4" y="10.0" width="5.6" height="5.6" fill="rgb(221,219,224)"/><rect x="65.5" y="10.0" width="5.6" height="5.6" fill="rgb(225,224,220)"/><rect x="70.5" y="10.0" width="5.6" height="5.6" fill="rgb(185,187,185)"/><rect x="75.5" y="10.0" width="5.6" height="5.6" fill="rgb(189,197,199)"/><rect x="80.6" y="10.0" width="5.6" height="5.6" fill="rgb(186,189,195)"/><rect x="85.6" y="10.0" width="5.6" height="5.6" fill="rgb(189,192,196)"/><rect x="90.6" y="10.0" width="5.6" height="5.6" fill="rgb(229,229,231)"/><rect x="95.7" y="10.0" width="5.6" height="5.6" fill="rgb(207,208,214)"/><rect x="100.7" y="10.0" width="5.6" height="5.6" fill="rgb(198,202,204)"/><rect x="105.8" y="10.0" width="5.6" height="5.6" fill="rgb(205,201,197)"/><rect x="110.8" y="10.0" width="5.6" height="5.6" fill="rgb(224,227,232)"/><rect x="115.8" y="10.0" width="5.6" height="5.6" fill="rgb(197,196,199)"/><rect x="120.9" y="10.0" width="5.6" height="5.6" fill="rgb(223,216,213)"/><rect x="125.9" y="10.0" width="5.6" height="5.6" fill="rgb(210,204,204)"/><rect x="130.9" y="10.0" width="5.6" height="5.6" fill="rgb(216,209,209)"/><rect x="136.0" y="10.0" width="5.6" height="5.6" fill="rgb(192,192,197)"/></g></g></svg><div class="txt icpt" style="left:189px">津IC</div><div class="txt icpt" style="right:748px">1</div><svg class="blob" style="left:211px;top:13px" width="108" height="15" viewBox="0 0 108 15"><clipPath id="c68"><rect width="108" height="15" rx="3.5"/></clipPath><g clip-path="url(#c68)"><g filter="url(#bl)"><rect x="0.0" y="0.0" width="5.5" height="5.6" fill="rgb(238,232,233)"/><rect x="4.9" y="0.0" width="5.5" height="5.6" fill="rgb(191,192,195)"/><rect x="9.8" y="0.0" width="5.5" height="5.6" fill="rgb(215,215,221)"/><rect x="14.7" y="0.0" width="5.5" height="5.6" fill="rgb(212,206,207)"/><rect x="19.6" y="0.0" width="5.5" height="5.6" fill="rgb(205,208,214)"/><rect x="24.5" y="0.0" width="5.5" height="5.6" fill="rgb(221,226,225)"/><rect x="29.5" y="0.0" width="5.5" height="5.6" fill="rgb(226,219,213)"/><rect x="34.4" y="0.0" width="5.5" height="5.6" fill="rgb(199,206,207)"/><rect x="39.3" y="0.0" width="5.5" height="5.6" fill="rgb(220,223,224)"/><rect x="44.2" y="0.0" width="5.5" height="5.6" fill="rgb(189,197,205)"/><rect x="49.1" y="0.0" width="5.5" height="5.6" fill="rgb(218,212,213)"/><rect x="54.0" y="0.0" width="5.5" height="5.6" fill="rgb(217,209,203)"/><rect x="58.9" y="0.0" width="5.5" height="5.6" fill="rgb(221,229,238)"/><rect x="63.8" y="0.0" width="5.5" height="5.6" fill="rgb(221,225,232)"/><rect x="68.7" y="0.0" width="5.5" height="5.6" fill="rgb(224,221,218)"/><rect x="73.6" y="0.0" width="5.5" height="5.6" fill="rgb(184,192,199)"/><rect x="78.5" y="0.0" width="5.5" height="5.6" fill="rgb(210,209,206)"/><rect x="83.5" y="0.0" width="5.5" height="5.6" fill="rgb(202,197,197)"/><rect x="88.4" y="0.0" width="5.5" height="5.6" fill="rgb(214,209,204)"/><rect x="93.3" y="0.0" width="5.5" height="5.6" fill="rgb(232,232,234)"/><rect x="98.2" y="0.0" width="5.5" height="5.6" fill="rgb(189,196,196)"/><rect x="103.1" y="0.0" width="5.5" height="5.6" fill="rgb(215,211,207)"/><rect x="0.0" y="5.0" width="5.5" height="5.6" fill="rgb(169,175,179)"/><rect x="4.9" y="5.0" width="5.5" height="5.6" fill="rgb(190,190,195)"/><rect x="9.8" y="5.0" width="5.5" height="5.6" fill="rgb(183,176,175)"/><rect x="14.7" y="5.0" width="5.5" height="5.6" fill="rgb(210,204,205)"/><rect x="19.6" y="5.0" width="5.5" height="5.6" fill="rgb(216,209,208)"/><rect x="24.5" y="5.0" width="5.5" height="5.6" fill="rgb(175,183,183)"/><rect x="29.5" y="5.0" width="5.5" height="5.6" fill="rgb(207,212,218)"/><rect x="34.4" y="5.0" width="5.5" height="5.6" fill="rgb(172,172,177)"/><rect x="39.3" y="5.0" width="5.5" height="5.6" fill="rgb(174,171,173)"/><rect x="44.2" y="5.0" width="5.5" height="5.6" fill="rgb(178,183,183)"/><rect x="49.1" y="5.0" width="5.5" height="5.6" fill="rgb(153,153,158)"/><rect x="54.0" y="5.0" width="5.5" height="5.6" fill="rgb(171,168,163)"/><rect x="58.9" y="5.0" width="5.5" height="5.6" fill="rgb(178,182,189)"/><rect x="63.8" y="5.0" width="5.5" height="5.6" fill="rgb(209,204,206)"/><rect x="68.7" y="5.0" width="5.5" height="5.6" fill="rgb(190,187,183)"/><rect x="73.6" y="5.0" width="5.5" height="5.6" fill="rgb(182,177,176)"/><rect x="78.5" y="5.0" width="5.5" height="5.6" fill="rgb(151,154,155)"/><rect x="83.5" y="5.0" width="5.5" height="5.6" fill="rgb(199,197,202)"/><rect x="88.4" y="5.0" width="5.5" height="5.6" fill="rgb(180,175,176)"/><rect x="93.3" y="5.0" width="5.5" height="5.6" fill="rgb(196,191,195)"/><rect x="98.2" y="5.0" width="5.5" height="5.6" fill="rgb(166,160,157)"/><rect x="103.1" y="5.0" width="5.5" height="5.6" fill="rgb(197,205,208)"/><rect x="0.0" y="10.0" width="5.5" height="5.6" fill="rgb(192,192,197)"/><rect x="4.9" y="10.0" width="5.5" height="5.6" fill="rgb(206,206,203)"/><rect x="9.8" y="10.0" width="5.5" height="5.6" fill="rgb(192,199,208)"/><rect x="14.7" y="10.0" width="5.5" height="5.6" fill="rgb(235,228,230)"/><rect x="19.6" y="10.0" width="5.5" height="5.6" fill="rgb(237,229,223)"/><rect x="24.5" y="10.0" width="5.5" height="5.6" fill="rgb(199,199,199)"/><rect x="29.5" y="10.0" width="5.5" height="5.6" fill="rgb(228,224,219)"/><rect x="34.4" y="10.0" width="5.5" height="5.6" fill="rgb(185,191,199)"/><rect x="39.3" y="10.0" width="5.5" height="5.6" fill="rgb(209,202,196)"/><rect x="44.2" y="10.0" width="5.5" height="5.6" fill="rgb(209,207,203)"/><rect x="49.1" y="10.0" width="5.5" height="5.6" fill="rgb(193,196,198)"/><rect x="54.0" y="10.0" width="5.5" height="5.6" fill="rgb(207,212,212)"/><rect x="58.9" y="10.0" width="5.5" height="5.6" fill="rgb(214,208,201)"/><rect x="63.8" y="10.0" width="5.5" height="5.6" fill="rgb(211,205,203)"/><rect x="68.7" y="10.0" width="5.5" height="5.6" fill="rgb(212,216,215)"/><rect x="73.6" y="10.0" width="5.5" height="5.6" fill="rgb(197,194,199)"/><rect x="78.5" y="10.0" width="5.5" height="5.6" fill="rgb(223,222,225)"/><rect x="83.5" y="10.0" width="5.5" height="5.6" fill="rgb(205,208,212)"/><rect x="88.4" y="10.0" width="5.5" height="5.6" fill="rgb(228,225,224)"/><rect x="93.3" y="10.0" width="5.5" height="5.6" fill="rgb(181,189,194)"/><rect x="98.2" y="10.0" width="5.5" height="5.6" fill="rgb(189,195,202)"/><rect x="103.1" y="10.0" width="5.5" height="5.6" fill="rgb(223,225,226)"/></g></g></svg><div class="date">2022-07-04 16:42:05</div><div class="st stb"><span>管局审核中</span></div><div class="tp">新增接入</div><div class="dash">-</div><div class="ops"><span class="ob ob55"><svg width="16" height="13" viewBox="0 0 16 13"><path d="M0.75 2.5A1.75 1.75 0 0 1 2.5 0.75h11A1.75 1.75 0 0 1 15.25 2.5v8A1.75 1.75 0 0 1 13.5 12.25h-11A1.75 1.75 0 0 1 0.75 10.5z" fill="#eeedf5" stroke="#1d80c6" stroke-width="1.5"/><rect x="0.75" y="0.75" width="14.5" height="3.2" rx="1.5" fill="#1d80c6"/><rect x="4.6" y="5" width="8.8" height="1.2" fill="#1d80c6"/><rect x="4.6" y="7.1" width="8.8" height="1.2" fill="#1d80c6"/><rect x="4.6" y="8.3" width="8.8" height="1.5" fill="#c9c6de"/><rect x="4.6" y="9.8" width="8.8" height="1.2" fill="#1d80c6"/><rect x="2.5" y="5" width="1.1" height="1.2" fill="#1d80c6"/><rect x="2.5" y="7.1" width="1.1" height="1.2" fill="#1d80c6"/><rect x="2.5" y="9.8" width="1.1" height="1.2" fill="#1d80c6"/></svg><b>查看</b></span></div></div>
<div class="row" style="top:392px"><div class="badge">5</div><svg class="blob" style="left:45px;top:13px" width="131" height="15" viewBox="0 0 131 15"><clipPath id="c55"><rect width="131" height="15" rx="3.5"/></clipPath><g clip-path="url(#c55)"><g filter="url(#bl)"><rect x="0.0" y="0.0" width="5.6" height="5.6" fill="rgb(188,190,189)"/><rect x="5.0" y="0.0" width="5.6" height="5.6" fill="rgb(233,232,229)"/><rect x="10.1" y="0.0" width="5.6" height="5.6" fill="rgb(229,232,234)"/><rect x="15.1" y="0.0" width="5.6" height="5.6" fill="rgb(193,190,195)"/><rect x="20.2" y="0.0" width="5.6" height="5.6" fill="rgb(219,215,215)"/><rect x="25.2" y="0.0" width="5.6" height="5.6" fill="rgb(221,217,216)"/><rect x="30.2" y="0.0" width="5.6" height="5.6" fill="rgb(236,231,233)"/><rect x="35.3" y="0.0" width="5.6" height="5.6" fill="rgb(218,225,235)"/><rect x="40.3" y="0.0" width="5.6" height="5.6" fill="rgb(194,201,204)"/><rect x="45.3" y="0.0" width="5.6" height="5.6" fill="rgb(209,217,226)"/><rect x="50.4" y="0.0" width="5.6" height="5.6" fill="rgb(213,214,211)"/><rect x="55.4" y="0.0" width="5.6" height="5.6" fill="rgb(208,209,207)"/><rect x="60.5" y="0.0" width="5.6" height="5.6" fill="rgb(222,217,214)"/><rect x="65.5" y="0.0" width="5.6" height="5.6" fill="rgb(197,199,202)"/><rect x="70.5" y="0.0" width="5.6" height="5.6" fill="rgb(196,195,196)"/><rect x="75.6" y="0.0" width="5.6" height="5.6" fill="rgb(180,185,190)"/><rect x="80.6" y="0.0" width="5.6" height="5.6" fill="rgb(206,204,204)"/><rect x="85.7" y="0.0" width="5.6" height="5.6" fill="rgb(222,224,224)"/><rect x="90.7" y="0.0" width="5.6" height="5.6" fill="rgb(211,214,214)"/><rect x="95.7" y="0.0" width="5.6" height="5.6" fill="rgb(200,199,203)"/><rect x="100.8" y="0.0" width="5.6" height="5.6" fill="rgb(201,195,191)"/><rect x="105.8" y="0.0" width="5.6" height="5.6" fill="rgb(200,204,208)"/><rect x="110.8" y="0.0" width="5.6" height="5.6" fill="rgb(210,215,220)"/><rect x="115.9" y="0.0" width="5.6" height="5.6" fill="rgb(221,227,230)"/><rect x="120.9" y="0.0" width="5.6" height="5.6" fill="rgb(188,188,188)"/><rect x="126.0" y="0.0" width="5.6" height="5.6" fill="rgb(205,205,203)"/><rect x="0.0" y="5.0" width="5.6" height="5.6" fill="rgb(160,155,156)"/><rect x="5.0" y="5.0" width="5.6" height="5.6" fill="rgb(215,208,202)"/><rect x="10.1" y="5.0" width="5.6" height="5.6" fill="rgb(206,206,210)"/><rect x="15.1" y="5.0" width="5.6" height="5.6" fill="rgb(185,190,193)"/><rect x="20.2" y="5.0" width="5.6" height="5.6" fill="rgb(177,173,175)"/><rect x="25.2" y="5.0" width="5.6" height="5.6" fill="rgb(206,199,201)"/><rect x="30.2" y="5.0" width="5.6" height="5.6" fill="rgb(167,167,163)"/><rect x="35.3" y="5.0" width="5.6" height="5.6" fill="rgb(178,175,176)"/><rect x="40.3" y="5.0" width="5.6" height="5.6" fill="rgb(189,186,189)"/><rect x="45.3" y="5.0" width="5.6" height="5.6" fill="rgb(138,145,150)"/><rect x="50.4" y="5.0" width="5.6" height="5.6" fill="rgb(177,170,168)"/><rect x="55.4" y="5.0" width="5.6" height="5.6" fill="rgb(213,205,201)"/><rect x="60.5" y="5.0" width="5.6" height="5.6" fill="rgb(216,212,210)"/><rect x="65.5" y="5.0" width="5.6" height="5.6" fill="rgb(205,207,214)"/><rect x="70.5" y="5.0" width="5.6" height="5.6" fill="rgb(173,176,182)"/><rect x="75.6" y="5.0" width="5.6" height="5.6" fill="rgb(174,171,173)"/><rect x="80.6" y="5.0" width="5.6" height="5.6" fill="rgb(199,207,207)"/><rect x="85.7" y="5.0" width="5.6" height="5.6" fill="rgb(165,157,153)"/><rect x="90.7" y="5.0" width="5.6" height="5.6" fill="rgb(175,168,164)"/><rect x="95.7" y="5.0" width="5.6" height="5.6" fill="rgb(192,197,202)"/><rect x="100.8" y="5.0" width="5.6" height="5.6" fill="rgb(171,170,169)"/><rect x="105.8" y="5.0" width="5.6" height="5.6" fill="rgb(202,210,220)"/><rect x="110.8" y="5.0" width="5.6" height="5.6" fill="rgb(180,173,175)"/><rect x="115.9" y="5.0" width="5.6" height="5.6" fill="rgb(203,205,208)"/><rect x="120.9" y="5.0" width="5.6" height="5.6" fill="rgb(151,148,150)"/><rect x="126.0" y="5.0" width="5.6" height="5.6" fill="rgb(173,179,184)"/><rect x="0.0" y="10.0" width="5.6" height="5.6" fill="rgb(212,207,209)"/><rect x="5.0" y="10.0" width="5.6" height="5.6" fill="rgb(212,210,206)"/><rect x="10.1" y="10.0" width="5.6" height="5.6" fill="rgb(184,188,192)"/><rect x="15.1" y="10.0" width="5.6" height="5.6" fill="rgb(186,194,195)"/><rect x="20.2" y="10.0" width="5.6" height="5.6" fill="rgb(212,219,229)"/><rect x="25.2" y="10.0" width="5.6" height="5.6" fill="rgb(230,230,231)"/><rect x="30.2" y="10.0" width="5.6" height="5.6" fill="rgb(182,188,193)"/><rect x="35.3" y="10.0" width="5.6" height="5.6" fill="rgb(218,219,216)"/><rect x="40.3" y="10.0" width="5.6" height="5.6" fill="rgb(223,217,211)"/><rect x="45.3" y="10.0" width="5.6" height="5.6" fill="rgb(190,187,188)"/><rect x="50.4" y="10.0" width="5.6" height="5.6" fill="rgb(220,228,234)"/><rect x="55.4" y="10.0" width="5.6" height="5.6" fill="rgb(216,217,218)"/><rect x="60.5" y="10.0" width="5.6" height="5.6" fill="rgb(190,194,201)"/><rect x="65.5" y="10.0" width="5.6" height="5.6" fill="rgb(225,224,228)"/><rect x="70.5" y="10.0" width="5.6" height="5.6" fill="rgb(226,218,220)"/><rect x="75.6" y="10.0" width="5.6" height="5.6" fill="rgb(196,202,207)"/><rect x="80.6" y="10.0" width="5.6" height="5.6" fill="rgb(207,215,220)"/><rect x="85.7" y="10.0" width="5.6" height="5.6" fill="rgb(200,192,193)"/><rect x="90.7" y="10.0" width="5.6" height="5.6" fill="rgb(184,191,201)"/><rect x="95.7" y="10.0" width="5.6" height="5.6" fill="rgb(230,229,226)"/><rect x="100.8" y="10.0" width="5.6" height="5.6" fill="rgb(196,199,207)"/><rect x="105.8" y="10.0" width="5.6" height="5.6" fill="rgb(197,190,190)"/><rect x="110.8" y="10.0" width="5.6" height="5.6" fill="rgb(193,201,202)"/><rect x="115.9" y="10.0" width="5.6" height="5.6" fill="rgb(232,228,223)"/><rect x="120.9" y="10.0" width="5.6" height="5.6" fill="rgb(216,220,225)"/><rect x="126.0" y="10.0" width="5.6" height="5.6" fill="rgb(203,210,215)"/></g></g></svg><div class="date">2022-07-04 16:35:00</div><div class="st stb"><span>管局审核中</span></div><div class="tp">新增网站</div><div class="dash">-</div><div class="ops"><span class="ob ob55"><svg width="16" height="13" viewBox="0 0 16 13"><path d="M0.75 2.5A1.75 1.75 0 0 1 2.5 0.75h11A1.75 1.75 0 0 1 15.25 2.5v8A1.75 1.75 0 0 1 13.5 12.25h-11A1.75 1.75 0 0 1 0.75 10.5z" fill="#eeedf5" stroke="#1d80c6" stroke-width="1.5"/><rect x="0.75" y="0.75" width="14.5" height="3.2" rx="1.5" fill="#1d80c6"/><rect x="4.6" y="5" width="8.8" height="1.2" fill="#1d80c6"/><rect x="4.6" y="7.1" width="8.8" height="1.2" fill="#1d80c6"/><rect x="4.6" y="8.3" width="8.8" height="1.5" fill="#c9c6de"/><rect x="4.6" y="9.8" width="8.8" height="1.2" fill="#1d80c6"/><rect x="2.5" y="5" width="1.1" height="1.2" fill="#1d80c6"/><rect x="2.5" y="7.1" width="1.1" height="1.2" fill="#1d80c6"/><rect x="2.5" y="9.8" width="1.1" height="1.2" fill="#1d80c6"/></svg><b>查看</b></span></div></div>
<div class="row" style="top:432px"><div class="badge">6</div><svg class="blob" style="left:43px;top:13px" width="108" height="15" viewBox="0 0 108 15"><clipPath id="c66"><rect width="108" height="15" rx="3.5"/></clipPath><g clip-path="url(#c66)"><g filter="url(#bl)"><rect x="0.0" y="0.0" width="5.5" height="5.6" fill="rgb(190,189,191)"/><rect x="4.9" y="0.0" width="5.5" height="5.6" fill="rgb(206,200,197)"/><rect x="9.8" y="0.0" width="5.5" height="5.6" fill="rgb(196,201,207)"/><rect x="14.7" y="0.0" width="5.5" height="5.6" fill="rgb(202,196,197)"/><rect x="19.6" y="0.0" width="5.5" height="5.6" fill="rgb(187,193,197)"/><rect x="24.5" y="0.0" width="5.5" height="5.6" fill="rgb(228,231,235)"/><rect x="29.5" y="0.0" width="5.5" height="5.6" fill="rgb(237,231,234)"/><rect x="34.4" y="0.0" width="5.5" height="5.6" fill="rgb(209,217,225)"/><rect x="39.3" y="0.0" width="5.5" height="5.6" fill="rgb(196,192,188)"/><rect x="44.2" y="0.0" width="5.5" height="5.6" fill="rgb(200,208,208)"/><rect x="49.1" y="0.0" width="5.5" height="5.6" fill="rgb(228,230,234)"/><rect x="54.0" y="0.0" width="5.5" height="5.6" fill="rgb(222,224,231)"/><rect x="58.9" y="0.0" width="5.5" height="5.6" fill="rgb(212,205,202)"/><rect x="63.8" y="0.0" width="5.5" height="5.6" fill="rgb(198,197,194)"/><rect x="68.7" y="0.0" width="5.5" height="5.6" fill="rgb(199,197,202)"/><rect x="73.6" y="0.0" width="5.5" height="5.6" fill="rgb(211,207,202)"/><rect x="78.5" y="0.0" width="5.5" height="5.6" fill="rgb(198,204,209)"/><rect x="83.5" y="0.0" width="5.5" height="5.6" fill="rgb(194,202,211)"/><rect x="88.4" y="0.0" width="5.5" height="5.6" fill="rgb(195,192,194)"/><rect x="93.3" y="0.0" width="5.5" height="5.6" fill="rgb(228,223,217)"/><rect x="98.2" y="0.0" width="5.5" height="5.6" fill="rgb(230,226,228)"/><rect x="103.1" y="0.0" width="5.5" height="5.6" fill="rgb(225,230,238)"/><rect x="0.0" y="5.0" width="5.5" height="5.6" fill="rgb(201,199,201)"/><rect x="4.9" y="5.0" width="5.5" height="5.6" fill="rgb(195,192,190)"/><rect x="9.8" y="5.0" width="5.5" height="5.6" fill="rgb(160,168,173)"/><rect x="14.7" y="5.0" width="5.5" height="5.6" fill="rgb(176,184,188)"/><rect x="19.6" y="5.0" width="5.5" height="5.6" fill="rgb(207,205,209)"/><rect x="24.5" y="5.0" width="5.5" height="5.6" fill="rgb(205,203,198)"/><rect x="29.5" y="5.0" width="5.5" height="5.6" fill="rgb(208,211,213)"/><rect x="34.4" y="5.0" width="5.5" height="5.6" fill="rgb(182,187,191)"/><rect x="39.3" y="5.0" width="5.5" height="5.6" fill="rgb(155,152,148)"/><rect x="44.2" y="5.0" width="5.5" height="5.6" fill="rgb(151,147,141)"/><rect x="49.1" y="5.0" width="5.5" height="5.6" fill="rgb(162,166,172)"/><rect x="54.0" y="5.0" width="5.5" height="5.6" fill="rgb(163,168,175)"/><rect x="58.9" y="5.0" width="5.5" height="5.6" fill="rgb(194,199,206)"/><rect x="63.8" y="5.0" width="5.5" height="5.6" fill="rgb(158,157,159)"/><rect x="68.7" y="5.0" width="5.5" height="5.6" fill="rgb(168,174,173)"/><rect x="73.6" y="5.0" width="5.5" height="5.6" fill="rgb(202,208,209)"/><rect x="78.5" y="5.0" width="5.5" height="5.6" fill="rgb(209,206,204)"/><rect x="83.5" y="5.0" width="5.5" height="5.6" fill="rgb(157,157,159)"/><rect x="88.4" y="5.0" width="5.5" height="5.6" fill="rgb(172,172,174)"/><rect x="93.3" y="5.0" width="5.5" height="5.6" fill="rgb(158,155,152)"/><rect x="98.2" y="5.0" width="5.5" height="5.6" fill="rgb(193,196,204)"/><rect x="103.1" y="5.0" width="5.5" height="5.6" fill="rgb(168,172,179)"/><rect x="0.0" y="10.0" width="5.5" height="5.6" fill="rgb(194,200,199)"/><rect x="4.9" y="10.0" width="5.5" height="5.6" fill="rgb(196,192,187)"/><rect x="9.8" y="10.0" width="5.5" height="5.6" fill="rgb(217,220,227)"/><rect x="14.7" y="10.0" width="5.5" height="5.6" fill="rgb(210,202,202)"/><rect x="19.6" y="10.0" width="5.5" height="5.6" fill="rgb(214,209,206)"/><rect x="24.5" y="10.0" width="5.5" height="5.6" fill="rgb(224,229,233)"/><rect x="29.5" y="10.0" width="5.5" height="5.6" fill="rgb(207,206,206)"/><rect x="34.4" y="10.0" width="5.5" height="5.6" fill="rgb(194,202,203)"/><rect x="39.3" y="10.0" width="5.5" height="5.6" fill="rgb(217,210,211)"/><rect x="44.2" y="10.0" width="5.5" height="5.6" fill="rgb(234,231,234)"/><rect x="49.1" y="10.0" width="5.5" height="5.6" fill="rgb(221,226,228)"/><rect x="54.0" y="10.0" width="5.5" height="5.6" fill="rgb(195,197,204)"/><rect x="58.9" y="10.0" width="5.5" height="5.6" fill="rgb(211,211,212)"/><rect x="63.8" y="10.0" width="5.5" height="5.6" fill="rgb(222,223,228)"/><rect x="68.7" y="10.0" width="5.5" height="5.6" fill="rgb(208,210,217)"/><rect x="73.6" y="10.0" width="5.5" height="5.6" fill="rgb(194,189,184)"/><rect x="78.5" y="10.0" width="5.5" height="5.6" fill="rgb(205,204,203)"/><rect x="83.5" y="10.0" width="5.5" height="5.6" fill="rgb(194,197,203)"/><rect x="88.4" y="10.0" width="5.5" height="5.6" fill="rgb(202,205,207)"/><rect x="93.3" y="10.0" width="5.5" height="5.6" fill="rgb(197,194,193)"/><rect x="98.2" y="10.0" width="5.5" height="5.6" fill="rgb(193,189,193)"/><rect x="103.1" y="10.0" width="5.5" height="5.6" fill="rgb(215,213,216)"/></g></g></svg><div class="txt" style="left:151px;font-size:12px">本...</div><div class="date">2022-07-04 13:49:29</div><div class="st stb"><span>管局审核中</span></div><div class="tp">新增网站</div><div class="dash">-</div><div class="ops"><span class="ob ob55"><svg width="16" height="13" viewBox="0 0 16 13"><path d="M0.75 2.5A1.75 1.75 0 0 1 2.5 0.75h11A1.75 1.75 0 0 1 15.25 2.5v8A1.75 1.75 0 0 1 13.5 12.25h-11A1.75 1.75 0 0 1 0.75 10.5z" fill="#eeedf5" stroke="#1d80c6" stroke-width="1.5"/><rect x="0.75" y="0.75" width="14.5" height="3.2" rx="1.5" fill="#1d80c6"/><rect x="4.6" y="5" width="8.8" height="1.2" fill="#1d80c6"/><rect x="4.6" y="7.1" width="8.8" height="1.2" fill="#1d80c6"/><rect x="4.6" y="8.3" width="8.8" height="1.5" fill="#c9c6de"/><rect x="4.6" y="9.8" width="8.8" height="1.2" fill="#1d80c6"/><rect x="2.5" y="5" width="1.1" height="1.2" fill="#1d80c6"/><rect x="2.5" y="7.1" width="1.1" height="1.2" fill="#1d80c6"/><rect x="2.5" y="9.8" width="1.1" height="1.2" fill="#1d80c6"/></svg><b>查看</b></span></div></div>
<div class="row" style="top:472px"><div class="badge">7</div><svg class="blob" style="left:44px;top:13px" width="125" height="15" viewBox="0 0 125 15"><clipPath id="c77"><rect width="125" height="15" rx="3.5"/></clipPath><g clip-path="url(#c77)"><g filter="url(#bl)"><rect x="0.0" y="0.0" width="5.6" height="5.6" fill="rgb(203,201,199)"/><rect x="5.0" y="0.0" width="5.6" height="5.6" fill="rgb(198,200,198)"/><rect x="10.0" y="0.0" width="5.6" height="5.6" fill="rgb(210,203,204)"/><rect x="15.0" y="0.0" width="5.6" height="5.6" fill="rgb(223,224,223)"/><rect x="20.0" y="0.0" width="5.6" height="5.6" fill="rgb(228,220,212)"/><rect x="25.0" y="0.0" width="5.6" height="5.6" fill="rgb(194,202,209)"/><rect x="30.0" y="0.0" width="5.6" height="5.6" fill="rgb(194,196,201)"/><rect x="35.0" y="0.0" width="5.6" height="5.6" fill="rgb(206,209,212)"/><rect x="40.0" y="0.0" width="5.6" height="5.6" fill="rgb(200,205,205)"/><rect x="45.0" y="0.0" width="5.6" height="5.6" fill="rgb(220,220,224)"/><rect x="50.0" y="0.0" width="5.6" height="5.6" fill="rgb(213,215,215)"/><rect x="55.0" y="0.0" width="5.6" height="5.6" fill="rgb(191,197,197)"/><rect x="60.0" y="0.0" width="5.6" height="5.6" fill="rgb(203,197,199)"/><rect x="65.0" y="0.0" width="5.6" height="5.6" fill="rgb(224,230,230)"/><rect x="70.0" y="0.0" width="5.6" height="5.6" fill="rgb(228,230,232)"/><rect x="75.0" y="0.0" width="5.6" height="5.6" fill="rgb(185,190,198)"/><rect x="80.0" y="0.0" width="5.6" height="5.6" fill="rgb(208,214,221)"/><rect x="85.0" y="0.0" width="5.6" height="5.6" fill="rgb(191,191,194)"/><rect x="90.0" y="0.0" width="5.6" height="5.6" fill="rgb(220,225,229)"/><rect x="95.0" y="0.0" width="5.6" height="5.6" fill="rgb(211,218,224)"/><rect x="100.0" y="0.0" width="5.6" height="5.6" fill="rgb(230,222,217)"/><rect x="105.0" y="0.0" width="5.6" height="5.6" fill="rgb(206,199,198)"/><rect x="110.0" y="0.0" width="5.6" height="5.6" fill="rgb(228,232,236)"/><rect x="115.0" y="0.0" width="5.6" height="5.6" fill="rgb(178,185,185)"/><rect x="120.0" y="0.0" width="5.6" height="5.6" fill="rgb(209,216,221)"/><rect x="0.0" y="5.0" width="5.6" height="5.6" fill="rgb(195,200,203)"/><rect x="5.0" y="5.0" width="5.6" height="5.6" fill="rgb(216,209,202)"/><rect x="10.0" y="5.0" width="5.6" height="5.6" fill="rgb(200,205,206)"/><rect x="15.0" y="5.0" width="5.6" height="5.6" fill="rgb(191,183,176)"/><rect x="20.0" y="5.0" width="5.6" height="5.6" fill="rgb(154,147,145)"/><rect x="25.0" y="5.0" width="5.6" height="5.6" fill="rgb(190,198,198)"/><rect x="30.0" y="5.0" width="5.6" height="5.6" fill="rgb(202,206,204)"/><rect x="35.0" y="5.0" width="5.6" height="5.6" fill="rgb(145,146,144)"/><rect x="40.0" y="5.0" width="5.6" height="5.6" fill="rgb(199,204,209)"/><rect x="45.0" y="5.0" width="5.6" height="5.6" fill="rgb(200,205,206)"/><rect x="50.0" y="5.0" width="5.6" height="5.6" fill="rgb(175,175,174)"/><rect x="55.0" y="5.0" width="5.6" height="5.6" fill="rgb(153,156,156)"/><rect x="60.0" y="5.0" width="5.6" height="5.6" fill="rgb(156,164,164)"/><rect x="65.0" y="5.0" width="5.6" height="5.6" fill="rgb(182,174,172)"/><rect x="70.0" y="5.0" width="5.6" height="5.6" fill="rgb(205,198,199)"/><rect x="75.0" y="5.0" width="5.6" height="5.6" fill="rgb(174,179,185)"/><rect x="80.0" y="5.0" width="5.6" height="5.6" fill="rgb(199,198,202)"/><rect x="85.0" y="5.0" width="5.6" height="5.6" fill="rgb(181,180,183)"/><rect x="90.0" y="5.0" width="5.6" height="5.6" fill="rgb(161,169,178)"/><rect x="95.0" y="5.0" width="5.6" height="5.6" fill="rgb(201,207,206)"/><rect x="100.0" y="5.0" width="5.6" height="5.6" fill="rgb(143,147,145)"/><rect x="105.0" y="5.0" width="5.6" height="5.6" fill="rgb(151,156,163)"/><rect x="110.0" y="5.0" width="5.6" height="5.6" fill="rgb(165,171,176)"/><rect x="115.0" y="5.0" width="5.6" height="5.6" fill="rgb(161,166,175)"/><rect x="120.0" y="5.0" width="5.6" height="5.6" fill="rgb(195,194,197)"/><rect x="0.0" y="10.0" width="5.6" height="5.6" fill="rgb(220,216,213)"/><rect x="5.0" y="10.0" width="5.6" height="5.6" fill="rgb(231,226,224)"/><rect x="10.0" y="10.0" width="5.6" height="5.6" fill="rgb(197,203,210)"/><rect x="15.0" y="10.0" width="5.6" height="5.6" fill="rgb(207,205,203)"/><rect x="20.0" y="10.0" width="5.6" height="5.6" fill="rgb(205,202,207)"/><rect x="25.0" y="10.0" width="5.6" height="5.6" fill="rgb(223,215,213)"/><rect x="30.0" y="10.0" width="5.6" height="5.6" fill="rgb(221,217,215)"/><rect x="35.0" y="10.0" width="5.6" height="5.6" fill="rgb(210,209,206)"/><rect x="40.0" y="10.0" width="5.6" height="5.6" fill="rgb(197,202,203)"/><rect x="45.0" y="10.0" width="5.6" height="5.6" fill="rgb(196,193,188)"/><rect x="50.0" y="10.0" width="5.6" height="5.6" fill="rgb(191,198,206)"/><rect x="55.0" y="10.0" width="5.6" height="5.6" fill="rgb(181,186,195)"/><rect x="60.0" y="10.0" width="5.6" height="5.6" fill="rgb(225,229,231)"/><rect x="65.0" y="10.0" width="5.6" height="5.6" fill="rgb(197,195,190)"/><rect x="70.0" y="10.0" width="5.6" height="5.6" fill="rgb(236,228,229)"/><rect x="75.0" y="10.0" width="5.6" height="5.6" fill="rgb(226,222,217)"/><rect x="80.0" y="10.0" width="5.6" height="5.6" fill="rgb(230,229,226)"/><rect x="85.0" y="10.0" width="5.6" height="5.6" fill="rgb(214,208,211)"/><rect x="90.0" y="10.0" width="5.6" height="5.6" fill="rgb(216,224,224)"/><rect x="95.0" y="10.0" width="5.6" height="5.6" fill="rgb(209,213,218)"/><rect x="100.0" y="10.0" width="5.6" height="5.6" fill="rgb(204,210,215)"/><rect x="105.0" y="10.0" width="5.6" height="5.6" fill="rgb(180,185,184)"/><rect x="110.0" y="10.0" width="5.6" height="5.6" fill="rgb(205,209,207)"/><rect x="115.0" y="10.0" width="5.6" height="5.6" fill="rgb(225,225,230)"/><rect x="120.0" y="10.0" width="5.6" height="5.6" fill="rgb(198,201,207)"/></g></g></svg><div class="date">2022-07-04 13:47:58</div><div class="st stb"><span>管局审核中</span></div><div class="tp">新增网站</div><div class="dash">-</div><div class="ops"><span class="ob ob55"><svg width="16" height="13" viewBox="0 0 16 13"><path d="M0.75 2.5A1.75 1.75 0 0 1 2.5 0.75h11A1.75 1.75 0 0 1 15.25 2.5v8A1.75 1.75 0 0 1 13.5 12.25h-11A1.75 1.75 0 0 1 0.75 10.5z" fill="#eeedf5" stroke="#1d80c6" stroke-width="1.5"/><rect x="0.75" y="0.75" width="14.5" height="3.2" rx="1.5" fill="#1d80c6"/><rect x="4.6" y="5" width="8.8" height="1.2" fill="#1d80c6"/><rect x="4.6" y="7.1" width="8.8" height="1.2" fill="#1d80c6"/><rect x="4.6" y="8.3" width="8.8" height="1.5" fill="#c9c6de"/><rect x="4.6" y="9.8" width="8.8" height="1.2" fill="#1d80c6"/><rect x="2.5" y="5" width="1.1" height="1.2" fill="#1d80c6"/><rect x="2.5" y="7.1" width="1.1" height="1.2" fill="#1d80c6"/><rect x="2.5" y="9.8" width="1.1" height="1.2" fill="#1d80c6"/></svg><b>查看</b></span></div></div>
<div class="row" style="top:512px"><div class="badge">8</div><svg class="blob" style="left:90px;top:13px" width="45" height="15" viewBox="0 0 45 15"><clipPath id="c88"><rect width="45" height="15" rx="3.5"/></clipPath><g clip-path="url(#c88)"><g filter="url(#bl)"><rect x="0.0" y="0.0" width="5.6" height="5.6" fill="rgb(208,210,212)"/><rect x="5.0" y="0.0" width="5.6" height="5.6" fill="rgb(188,196,204)"/><rect x="10.0" y="0.0" width="5.6" height="5.6" fill="rgb(221,229,234)"/><rect x="15.0" y="0.0" width="5.6" height="5.6" fill="rgb(234,228,223)"/><rect x="20.0" y="0.0" width="5.6" height="5.6" fill="rgb(194,199,200)"/><rect x="25.0" y="0.0" width="5.6" height="5.6" fill="rgb(220,223,228)"/><rect x="30.0" y="0.0" width="5.6" height="5.6" fill="rgb(213,211,216)"/><rect x="35.0" y="0.0" width="5.6" height="5.6" fill="rgb(208,212,214)"/><rect x="40.0" y="0.0" width="5.6" height="5.6" fill="rgb(190,195,201)"/><rect x="0.0" y="5.0" width="5.6" height="5.6" fill="rgb(181,188,190)"/><rect x="5.0" y="5.0" width="5.6" height="5.6" fill="rgb(182,176,172)"/><rect x="10.0" y="5.0" width="5.6" height="5.6" fill="rgb(170,173,171)"/><rect x="15.0" y="5.0" width="5.6" height="5.6" fill="rgb(183,175,174)"/><rect x="20.0" y="5.0" width="5.6" height="5.6" fill="rgb(204,212,219)"/><rect x="25.0" y="5.0" width="5.6" height="5.6" fill="rgb(201,193,191)"/><rect x="30.0" y="5.0" width="5.6" height="5.6" fill="rgb(213,205,198)"/><rect x="35.0" y="5.0" width="5.6" height="5.6" fill="rgb(203,207,211)"/><rect x="40.0" y="5.0" width="5.6" height="5.6" fill="rgb(142,146,146)"/><rect x="0.0" y="10.0" width="5.6" height="5.6" fill="rgb(213,212,218)"/><rect x="5.0" y="10.0" width="5.6" height="5.6" fill="rgb(182,186,185)"/><rect x="10.0" y="10.0" width="5.6" height="5.6" fill="rgb(228,220,213)"/><rect x="15.0" y="10.0" width="5.6" height="5.6" fill="rgb(210,209,210)"/><rect x="20.0" y="10.0" width="5.6" height="5.6" fill="rgb(228,230,233)"/><rect x="25.0" y="10.0" width="5.6" height="5.6" fill="rgb(216,208,200)"/><rect x="30.0" y="10.0" width="5.6" height="5.6" fill="rgb(217,214,218)"/><rect x="35.0" y="10.0" width="5.6" height="5.6" fill="rgb(209,205,201)"/><rect x="40.0" y="10.0" width="5.6" height="5.6" fill="rgb(208,207,213)"/></g></g></svg><div class="txt icpt" style="left:189px">津ICP备</div><div class="txt icpt" style="right:748px">号-1</div><svg class="blob" style="left:220px;top:13px" width="89" height="15" viewBox="0 0 89 15"><clipPath id="c136"><rect width="89" height="15" rx="3.5"/></clipPath><g clip-path="url(#c136)"><g filter="url(#bl)"><rect x="0.0" y="0.0" width="5.5" height="5.6" fill="rgb(226,221,223)"/><rect x="4.9" y="0.0" width="5.5" height="5.6" fill="rgb(193,188,189)"/><rect x="9.9" y="0.0" width="5.5" height="5.6" fill="rgb(202,197,193)"/><rect x="14.8" y="0.0" width="5.5" height="5.6" fill="rgb(202,195,188)"/><rect x="19.8" y="0.0" width="5.5" height="5.6" fill="rgb(188,195,204)"/><rect x="24.7" y="0.0" width="5.5" height="5.6" fill="rgb(186,188,188)"/><rect x="29.7" y="0.0" width="5.5" height="5.6" fill="rgb(223,223,228)"/><rect x="34.6" y="0.0" width="5.5" height="5.6" fill="rgb(211,207,208)"/><rect x="39.6" y="0.0" width="5.5" height="5.6" fill="rgb(222,230,231)"/><rect x="44.5" y="0.0" width="5.5" height="5.6" fill="rgb(230,230,234)"/><rect x="49.4" y="0.0" width="5.5" height="5.6" fill="rgb(179,186,188)"/><rect x="54.4" y="0.0" width="5.5" height="5.6" fill="rgb(230,228,231)"/><rect x="59.3" y="0.0" width="5.5" height="5.6" fill="rgb(202,204,205)"/><rect x="64.3" y="0.0" width="5.5" height="5.6" fill="rgb(206,201,196)"/><rect x="69.2" y="0.0" width="5.5" height="5.6" fill="rgb(227,227,232)"/><rect x="74.2" y="0.0" width="5.5" height="5.6" fill="rgb(229,225,220)"/><rect x="79.1" y="0.0" width="5.5" height="5.6" fill="rgb(222,230,238)"/><rect x="84.1" y="0.0" width="5.5" height="5.6" fill="rgb(225,226,226)"/><rect x="0.0" y="5.0" width="5.5" height="5.6" fill="rgb(184,188,194)"/><rect x="4.9" y="5.0" width="5.5" height="5.6" fill="rgb(153,146,146)"/><rect x="9.9" y="5.0" width="5.5" height="5.6" fill="rgb(152,156,159)"/><rect x="14.8" y="5.0" width="5.5" height="5.6" fill="rgb(178,173,170)"/><rect x="19.8" y="5.0" width="5.5" height="5.6" fill="rgb(204,198,198)"/><rect x="24.7" y="5.0" width="5.5" height="5.6" fill="rgb(180,175,176)"/><rect x="29.7" y="5.0" width="5.5" height="5.6" fill="rgb(181,183,182)"/><rect x="34.6" y="5.0" width="5.5" height="5.6" fill="rgb(192,188,188)"/><rect x="39.6" y="5.0" width="5.5" height="5.6" fill="rgb(204,208,209)"/><rect x="44.5" y="5.0" width="5.5" height="5.6" fill="rgb(198,205,212)"/><rect x="49.4" y="5.0" width="5.5" height="5.6" fill="rgb(211,208,209)"/><rect x="54.4" y="5.0" width="5.5" height="5.6" fill="rgb(204,210,219)"/><rect x="59.3" y="5.0" width="5.5" height="5.6" fill="rgb(191,188,183)"/><rect x="64.3" y="5.0" width="5.5" height="5.6" fill="rgb(192,185,188)"/><rect x="69.2" y="5.0" width="5.5" height="5.6" fill="rgb(170,170,175)"/><rect x="74.2" y="5.0" width="5.5" height="5.6" fill="rgb(149,155,161)"/><rect x="79.1" y="5.0" width="5.5" height="5.6" fill="rgb(157,151,146)"/><rect x="84.1" y="5.0" width="5.5" height="5.6" fill="rgb(190,197,203)"/><rect x="0.0" y="10.0" width="5.5" height="5.6" fill="rgb(209,209,206)"/><rect x="4.9" y="10.0" width="5.5" height="5.6" fill="rgb(204,199,194)"/><rect x="9.9" y="10.0" width="5.5" height="5.6" fill="rgb(229,226,227)"/><rect x="14.8" y="10.0" width="5.5" height="5.6" fill="rgb(190,197,205)"/><rect x="19.8" y="10.0" width="5.5" height="5.6" fill="rgb(225,219,213)"/><rect x="24.7" y="10.0" width="5.5" height="5.6" fill="rgb(181,186,188)"/><rect x="29.7" y="10.0" width="5.5" height="5.6" fill="rgb(202,208,215)"/><rect x="34.6" y="10.0" width="5.5" height="5.6" fill="rgb(237,230,230)"/><rect x="39.6" y="10.0" width="5.5" height="5.6" fill="rgb(216,208,203)"/><rect x="44.5" y="10.0" width="5.5" height="5.6" fill="rgb(222,218,215)"/><rect x="49.4" y="10.0" width="5.5" height="5.6" fill="rgb(195,187,186)"/><rect x="54.4" y="10.0" width="5.5" height="5.6" fill="rgb(197,191,188)"/><rect x="59.3" y="10.0" width="5.5" height="5.6" fill="rgb(223,218,215)"/><rect x="64.3" y="10.0" width="5.5" height="5.6" fill="rgb(230,227,227)"/><rect x="69.2" y="10.0" width="5.5" height="5.6" fill="rgb(217,220,227)"/><rect x="74.2" y="10.0" width="5.5" height="5.6" fill="rgb(213,215,221)"/><rect x="79.1" y="10.0" width="5.5" height="5.6" fill="rgb(204,199,196)"/><rect x="84.1" y="10.0" width="5.5" height="5.6" fill="rgb(200,206,211)"/></g></g></svg><div class="date">2022-07-04 11:28:52</div><div class="st stg"><span>管局审核通过</span></div><div class="tp">新增备案</div><div class="dash">-</div><div class="ops"><span class="ob ob55"><svg width="16" height="13" viewBox="0 0 16 13"><path d="M0.75 2.5A1.75 1.75 0 0 1 2.5 0.75h11A1.75 1.75 0 0 1 15.25 2.5v8A1.75 1.75 0 0 1 13.5 12.25h-11A1.75 1.75 0 0 1 0.75 10.5z" fill="#eeedf5" stroke="#1d80c6" stroke-width="1.5"/><rect x="0.75" y="0.75" width="14.5" height="3.2" rx="1.5" fill="#1d80c6"/><rect x="4.6" y="5" width="8.8" height="1.2" fill="#1d80c6"/><rect x="4.6" y="7.1" width="8.8" height="1.2" fill="#1d80c6"/><rect x="4.6" y="8.3" width="8.8" height="1.5" fill="#c9c6de"/><rect x="4.6" y="9.8" width="8.8" height="1.2" fill="#1d80c6"/><rect x="2.5" y="5" width="1.1" height="1.2" fill="#1d80c6"/><rect x="2.5" y="7.1" width="1.1" height="1.2" fill="#1d80c6"/><rect x="2.5" y="9.8" width="1.1" height="1.2" fill="#1d80c6"/></svg><b>查看</b></span><span class="ob ob80"><svg width="17" height="13" viewBox="0 0 17 13"><path d="M10 0.8H3.3A2.5 2.5 0 0 0 0.8 3.3v6.4a2.5 2.5 0 0 0 2.5 2.5h6.4a2.5 2.5 0 0 0 2.5-2.5V7.5" fill="none" stroke="#2ac3a2" stroke-width="1.6"/><path d="M7.6 9.4L15 2.2" stroke="#2ac3a2" stroke-width="3.6" stroke-linecap="round"/><circle cx="7.9" cy="9.1" r="0.9" fill="#e8fbf6"/></svg><b>变更网站</b></span><span class="ob ob55"><svg width="15" height="12" viewBox="0 0 15 12"><path d="M5.6 0.8H3A2.2 2.2 0 0 0 0.8 3v6A2.2 2.2 0 0 0 3 11.2h2.6" fill="none" stroke="#ffb574" stroke-width="1.5"/><path d="M4.2 4h4.3V0.2L14.3 6 8.5 11.8V8H4.2z" fill="#ffa23e"/></svg><b>注销</b></span></div></div>
<div class="row" style="top:552px"><div class="badge">9</div><svg class="blob" style="left:46px;top:13px" width="134" height="15" viewBox="0 0 134 15"><clipPath id="c99"><rect width="134" height="15" rx="3.5"/></clipPath><g clip-path="url(#c99)"><g filter="url(#bl)"><rect x="0.0" y="0.0" width="5.6" height="5.6" fill="rgb(214,210,207)"/><rect x="5.0" y="0.0" width="5.6" height="5.6" fill="rgb(220,223,224)"/><rect x="9.9" y="0.0" width="5.6" height="5.6" fill="rgb(196,200,199)"/><rect x="14.9" y="0.0" width="5.6" height="5.6" fill="rgb(205,201,203)"/><rect x="19.9" y="0.0" width="5.6" height="5.6" fill="rgb(222,228,236)"/><rect x="24.8" y="0.0" width="5.6" height="5.6" fill="rgb(214,216,219)"/><rect x="29.8" y="0.0" width="5.6" height="5.6" fill="rgb(229,231,233)"/><rect x="34.7" y="0.0" width="5.6" height="5.6" fill="rgb(207,209,208)"/><rect x="39.7" y="0.0" width="5.6" height="5.6" fill="rgb(211,214,221)"/><rect x="44.7" y="0.0" width="5.6" height="5.6" fill="rgb(200,206,213)"/><rect x="49.6" y="0.0" width="5.6" height="5.6" fill="rgb(222,228,234)"/><rect x="54.6" y="0.0" width="5.6" height="5.6" fill="rgb(209,205,199)"/><rect x="59.6" y="0.0" width="5.6" height="5.6" fill="rgb(194,202,208)"/><rect x="64.5" y="0.0" width="5.6" height="5.6" fill="rgb(201,198,201)"/><rect x="69.5" y="0.0" width="5.6" height="5.6" fill="rgb(196,190,191)"/><rect x="74.4" y="0.0" width="5.6" height="5.6" fill="rgb(203,197,190)"/><rect x="79.4" y="0.0" width="5.6" height="5.6" fill="rgb(203,207,208)"/><rect x="84.4" y="0.0" width="5.6" height="5.6" fill="rgb(227,230,235)"/><rect x="89.3" y="0.0" width="5.6" height="5.6" fill="rgb(220,223,229)"/><rect x="94.3" y="0.0" width="5.6" height="5.6" fill="rgb(224,227,225)"/><rect x="99.3" y="0.0" width="5.6" height="5.6" fill="rgb(184,192,194)"/><rect x="104.2" y="0.0" width="5.6" height="5.6" fill="rgb(220,215,210)"/><rect x="109.2" y="0.0" width="5.6" height="5.6" fill="rgb(206,212,213)"/><rect x="114.1" y="0.0" width="5.6" height="5.6" fill="rgb(196,204,210)"/><rect x="119.1" y="0.0" width="5.6" height="5.6" fill="rgb(202,206,212)"/><rect x="124.1" y="0.0" width="5.6" height="5.6" fill="rgb(208,210,207)"/><rect x="129.0" y="0.0" width="5.6" height="5.6" fill="rgb(223,225,229)"/><rect x="0.0" y="5.0" width="5.6" height="5.6" fill="rgb(181,177,173)"/><rect x="5.0" y="5.0" width="5.6" height="5.6" fill="rgb(197,190,183)"/><rect x="9.9" y="5.0" width="5.6" height="5.6" fill="rgb(157,161,168)"/><rect x="14.9" y="5.0" width="5.6" height="5.6" fill="rgb(192,197,197)"/><rect x="19.9" y="5.0" width="5.6" height="5.6" fill="rgb(156,160,162)"/><rect x="24.8" y="5.0" width="5.6" height="5.6" fill="rgb(164,167,171)"/><rect x="29.8" y="5.0" width="5.6" height="5.6" fill="rgb(161,163,168)"/><rect x="34.7" y="5.0" width="5.6" height="5.6" fill="rgb(192,185,181)"/><rect x="39.7" y="5.0" width="5.6" height="5.6" fill="rgb(172,177,181)"/><rect x="44.7" y="5.0" width="5.6" height="5.6" fill="rgb(162,168,175)"/><rect x="49.6" y="5.0" width="5.6" height="5.6" fill="rgb(173,181,190)"/><rect x="54.6" y="5.0" width="5.6" height="5.6" fill="rgb(153,151,149)"/><rect x="59.6" y="5.0" width="5.6" height="5.6" fill="rgb(197,193,192)"/><rect x="64.5" y="5.0" width="5.6" height="5.6" fill="rgb(200,196,196)"/><rect x="69.5" y="5.0" width="5.6" height="5.6" fill="rgb(186,192,193)"/><rect x="74.4" y="5.0" width="5.6" height="5.6" fill="rgb(152,149,150)"/><rect x="79.4" y="5.0" width="5.6" height="5.6" fill="rgb(200,201,202)"/><rect x="84.4" y="5.0" width="5.6" height="5.6" fill="rgb(174,173,170)"/><rect x="89.3" y="5.0" width="5.6" height="5.6" fill="rgb(183,185,192)"/><rect x="94.3" y="5.0" width="5.6" height="5.6" fill="rgb(180,176,174)"/><rect x="99.3" y="5.0" width="5.6" height="5.6" fill="rgb(195,201,207)"/><rect x="104.2" y="5.0" width="5.6" height="5.6" fill="rgb(198,198,195)"/><rect x="109.2" y="5.0" width="5.6" height="5.6" fill="rgb(210,209,215)"/><rect x="114.1" y="5.0" width="5.6" height="5.6" fill="rgb(193,186,187)"/><rect x="119.1" y="5.0" width="5.6" height="5.6" fill="rgb(161,161,163)"/><rect x="124.1" y="5.0" width="5.6" height="5.6" fill="rgb(187,182,186)"/><rect x="129.0" y="5.0" width="5.6" height="5.6" fill="rgb(166,165,167)"/><rect x="0.0" y="10.0" width="5.6" height="5.6" fill="rgb(234,228,224)"/><rect x="5.0" y="10.0" width="5.6" height="5.6" fill="rgb(211,209,207)"/><rect x="9.9" y="10.0" width="5.6" height="5.6" fill="rgb(199,207,217)"/><rect x="14.9" y="10.0" width="5.6" height="5.6" fill="rgb(208,207,206)"/><rect x="19.9" y="10.0" width="5.6" height="5.6" fill="rgb(224,227,235)"/><rect x="24.8" y="10.0" width="5.6" height="5.6" fill="rgb(206,201,198)"/><rect x="29.8" y="10.0" width="5.6" height="5.6" fill="rgb(214,211,216)"/><rect x="34.7" y="10.0" width="5.6" height="5.6" fill="rgb(202,210,211)"/><rect x="39.7" y="10.0" width="5.6" height="5.6" fill="rgb(215,217,214)"/><rect x="44.7" y="10.0" width="5.6" height="5.6" fill="rgb(219,218,224)"/><rect x="49.6" y="10.0" width="5.6" height="5.6" fill="rgb(229,232,238)"/><rect x="54.6" y="10.0" width="5.6" height="5.6" fill="rgb(211,213,214)"/><rect x="59.6" y="10.0" width="5.6" height="5.6" fill="rgb(237,232,233)"/><rect x="64.5" y="10.0" width="5.6" height="5.6" fill="rgb(228,220,222)"/><rect x="69.5" y="10.0" width="5.6" height="5.6" fill="rgb(225,224,223)"/><rect x="74.4" y="10.0" width="5.6" height="5.6" fill="rgb(224,232,233)"/><rect x="79.4" y="10.0" width="5.6" height="5.6" fill="rgb(198,204,212)"/><rect x="84.4" y="10.0" width="5.6" height="5.6" fill="rgb(180,187,193)"/><rect x="89.3" y="10.0" width="5.6" height="5.6" fill="rgb(207,204,207)"/><rect x="94.3" y="10.0" width="5.6" height="5.6" fill="rgb(226,225,224)"/><rect x="99.3" y="10.0" width="5.6" height="5.6" fill="rgb(195,191,191)"/><rect x="104.2" y="10.0" width="5.6" height="5.6" fill="rgb(196,196,199)"/><rect x="109.2" y="10.0" width="5.6" height="5.6" fill="rgb(202,206,206)"/><rect x="114.1" y="10.0" width="5.6" height="5.6" fill="rgb(217,213,213)"/><rect x="119.1" y="10.0" width="5.6" height="5.6" fill="rgb(217,220,223)"/><rect x="124.1" y="10.0" width="5.6" height="5.6" fill="rgb(199,201,202)"/><rect x="129.0" y="10.0" width="5.6" height="5.6" fill="rgb(218,214,210)"/></g></g></svg><div class="txt icpt" style="left:189px">津ICP备</div><div class="txt icpt" style="right:748px">-1</div><svg class="blob" style="left:230px;top:13px" width="84" height="15" viewBox="0 0 84 15"><clipPath id="c153"><rect width="84" height="15" rx="3.5"/></clipPath><g clip-path="url(#c153)"><g filter="url(#bl)"><rect x="0.0" y="0.0" width="5.5" height="5.6" fill="rgb(210,216,215)"/><rect x="4.9" y="0.0" width="5.5" height="5.6" fill="rgb(206,201,204)"/><rect x="9.9" y="0.0" width="5.5" height="5.6" fill="rgb(223,221,222)"/><rect x="14.8" y="0.0" width="5.5" height="5.6" fill="rgb(208,200,200)"/><rect x="19.8" y="0.0" width="5.5" height="5.6" fill="rgb(203,205,205)"/><rect x="24.7" y="0.0" width="5.5" height="5.6" fill="rgb(204,199,203)"/><rect x="29.6" y="0.0" width="5.5" height="5.6" fill="rgb(217,223,232)"/><rect x="34.6" y="0.0" width="5.5" height="5.6" fill="rgb(199,201,203)"/><rect x="39.5" y="0.0" width="5.5" height="5.6" fill="rgb(231,230,226)"/><rect x="44.5" y="0.0" width="5.5" height="5.6" fill="rgb(212,207,211)"/><rect x="49.4" y="0.0" width="5.5" height="5.6" fill="rgb(213,216,214)"/><rect x="54.4" y="0.0" width="5.5" height="5.6" fill="rgb(218,221,228)"/><rect x="59.3" y="0.0" width="5.5" height="5.6" fill="rgb(200,195,196)"/><rect x="64.2" y="0.0" width="5.5" height="5.6" fill="rgb(218,225,227)"/><rect x="69.2" y="0.0" width="5.5" height="5.6" fill="rgb(202,198,194)"/><rect x="74.1" y="0.0" width="5.5" height="5.6" fill="rgb(206,205,206)"/><rect x="79.1" y="0.0" width="5.5" height="5.6" fill="rgb(216,220,227)"/><rect x="0.0" y="5.0" width="5.5" height="5.6" fill="rgb(160,159,158)"/><rect x="4.9" y="5.0" width="5.5" height="5.6" fill="rgb(211,204,203)"/><rect x="9.9" y="5.0" width="5.5" height="5.6" fill="rgb(202,208,210)"/><rect x="14.8" y="5.0" width="5.5" height="5.6" fill="rgb(208,201,201)"/><rect x="19.8" y="5.0" width="5.5" height="5.6" fill="rgb(179,176,181)"/><rect x="24.7" y="5.0" width="5.5" height="5.6" fill="rgb(182,178,180)"/><rect x="29.6" y="5.0" width="5.5" height="5.6" fill="rgb(207,211,214)"/><rect x="34.6" y="5.0" width="5.5" height="5.6" fill="rgb(139,145,144)"/><rect x="39.5" y="5.0" width="5.5" height="5.6" fill="rgb(160,160,156)"/><rect x="44.5" y="5.0" width="5.5" height="5.6" fill="rgb(193,198,204)"/><rect x="49.4" y="5.0" width="5.5" height="5.6" fill="rgb(205,197,192)"/><rect x="54.4" y="5.0" width="5.5" height="5.6" fill="rgb(198,196,192)"/><rect x="59.3" y="5.0" width="5.5" height="5.6" fill="rgb(214,208,209)"/><rect x="64.2" y="5.0" width="5.5" height="5.6" fill="rgb(184,176,177)"/><rect x="69.2" y="5.0" width="5.5" height="5.6" fill="rgb(153,153,159)"/><rect x="74.1" y="5.0" width="5.5" height="5.6" fill="rgb(151,159,169)"/><rect x="79.1" y="5.0" width="5.5" height="5.6" fill="rgb(197,203,207)"/><rect x="0.0" y="10.0" width="5.5" height="5.6" fill="rgb(229,232,233)"/><rect x="4.9" y="10.0" width="5.5" height="5.6" fill="rgb(199,200,202)"/><rect x="9.9" y="10.0" width="5.5" height="5.6" fill="rgb(225,226,233)"/><rect x="14.8" y="10.0" width="5.5" height="5.6" fill="rgb(218,226,231)"/><rect x="19.8" y="10.0" width="5.5" height="5.6" fill="rgb(224,229,231)"/><rect x="24.7" y="10.0" width="5.5" height="5.6" fill="rgb(205,207,207)"/><rect x="29.6" y="10.0" width="5.5" height="5.6" fill="rgb(189,188,184)"/><rect x="34.6" y="10.0" width="5.5" height="5.6" fill="rgb(203,202,205)"/><rect x="39.5" y="10.0" width="5.5" height="5.6" fill="rgb(224,228,227)"/><rect x="44.5" y="10.0" width="5.5" height="5.6" fill="rgb(198,192,189)"/><rect x="49.4" y="10.0" width="5.5" height="5.6" fill="rgb(182,190,196)"/><rect x="54.4" y="10.0" width="5.5" height="5.6" fill="rgb(203,199,193)"/><rect x="59.3" y="10.0" width="5.5" height="5.6" fill="rgb(200,208,217)"/><rect x="64.2" y="10.0" width="5.5" height="5.6" fill="rgb(226,222,218)"/><rect x="69.2" y="10.0" width="5.5" height="5.6" fill="rgb(230,232,239)"/><rect x="74.1" y="10.0" width="5.5" height="5.6" fill="rgb(204,197,190)"/><rect x="79.1" y="10.0" width="5.5" height="5.6" fill="rgb(202,195,188)"/></g></g></svg><svg class="blob" style="left:184px;top:13px" width="11" height="15" viewBox="0 0 11 15"><clipPath id="c207"><rect width="11" height="15" rx="3.5"/></clipPath><g clip-path="url(#c207)"><g filter="url(#bl)"><rect x="0.0" y="0.0" width="6.1" height="5.6" fill="rgb(216,217,216)"/><rect x="5.5" y="0.0" width="6.1" height="5.6" fill="rgb(189,186,183)"/><rect x="0.0" y="5.0" width="6.1" height="5.6" fill="rgb(201,207,206)"/><rect x="5.5" y="5.0" width="6.1" height="5.6" fill="rgb(188,185,182)"/><rect x="0.0" y="10.0" width="6.1" height="5.6" fill="rgb(190,196,200)"/><rect x="5.5" y="10.0" width="6.1" height="5.6" fill="rgb(227,221,217)"/></g></g></svg><div class="date">2022-07-04 11:10:23</div><div class="st stb"><span>国瑞数码安全系统股份有限公司</span></div><div class="tp">变更备案</div><div class="dash">-</div><div class="ops"><span class="ob ob55"><svg width="16" height="13" viewBox="0 0 16 13"><path d="M0.75 2.5A1.75 1.75 0 0 1 2.5 0.75h11A1.75 1.75 0 0 1 15.25 2.5v8A1.75 1.75 0 0 1 13.5 12.25h-11A1.75 1.75 0 0 1 0.75 10.5z" fill="#eeedf5" stroke="#1d80c6" stroke-width="1.5"/><rect x="0.75" y="0.75" width="14.5" height="3.2" rx="1.5" fill="#1d80c6"/><rect x="4.6" y="5" width="8.8" height="1.2" fill="#1d80c6"/><rect x="4.6" y="7.1" width="8.8" height="1.2" fill="#1d80c6"/><rect x="4.6" y="8.3" width="8.8" height="1.5" fill="#c9c6de"/><rect x="4.6" y="9.8" width="8.8" height="1.2" fill="#1d80c6"/><rect x="2.5" y="5" width="1.1" height="1.2" fill="#1d80c6"/><rect x="2.5" y="7.1" width="1.1" height="1.2" fill="#1d80c6"/><rect x="2.5" y="9.8" width="1.1" height="1.2" fill="#1d80c6"/></svg><b>查看</b></span></div></div>
<div class="row" style="top:592px"><div class="badge">10</div><div class="date">2022-07-04 10:58:11</div><div class="st stb"><span>管局审核中</span></div><div class="tp">新增网站</div><div class="dash">-</div><div class="ops"><span class="ob ob55"><svg width="16" height="13" viewBox="0 0 16 13"><path d="M0.75 2.5A1.75 1.75 0 0 1 2.5 0.75h11A1.75 1.75 0 0 1 15.25 2.5v8A1.75 1.75 0 0 1 13.5 12.25h-11A1.75 1.75 0 0 1 0.75 10.5z" fill="#eeedf5" stroke="#1d80c6" stroke-width="1.5"/><rect x="0.75" y="0.75" width="14.5" height="3.2" rx="1.5" fill="#1d80c6"/><rect x="4.6" y="5" width="8.8" height="1.2" fill="#1d80c6"/><rect x="4.6" y="7.1" width="8.8" height="1.2" fill="#1d80c6"/><rect x="4.6" y="8.3" width="8.8" height="1.5" fill="#c9c6de"/><rect x="4.6" y="9.8" width="8.8" height="1.2" fill="#1d80c6"/><rect x="2.5" y="5" width="1.1" height="1.2" fill="#1d80c6"/><rect x="2.5" y="7.1" width="1.1" height="1.2" fill="#1d80c6"/><rect x="2.5" y="9.8" width="1.1" height="1.2" fill="#1d80c6"/></svg><b>查看</b></span></div></div>
</div>

<div id="wm1">激活 Windows</div>
<div id="wm2">转到“设置”以激活 Windows。</div>
</body></html>
